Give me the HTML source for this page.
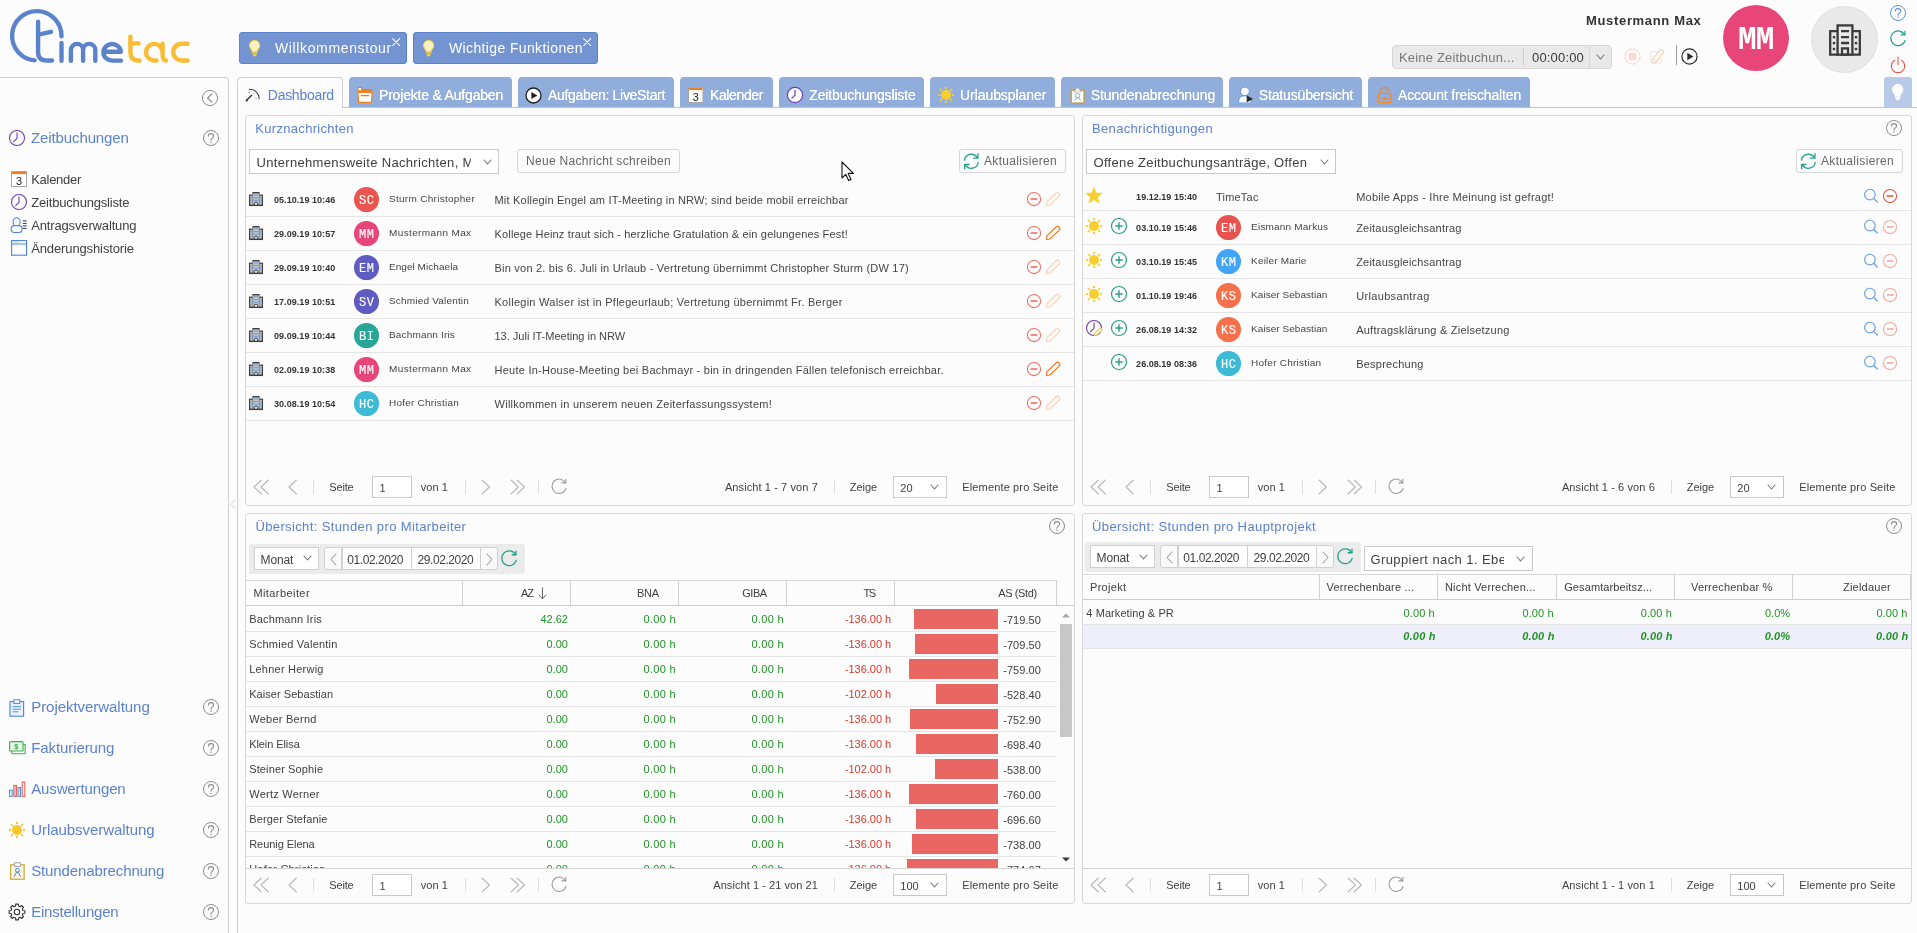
<!DOCTYPE html>
<html><head><meta charset="utf-8"><title>TimeTac</title>
<style>
*{box-sizing:border-box;margin:0;padding:0}
html,body{width:1917px;height:933px;overflow:hidden;background:#fcfcfc;font-family:"Liberation Sans",sans-serif;color:#404040;font-size:12px}
.a{position:absolute}
.t{position:absolute;white-space:nowrap;line-height:1}
svg{position:absolute;overflow:visible}
.blue{color:#5b82cc}
#side{left:0;top:77px;width:229px;height:860px;border-top:1px solid #cfcfcf;border-right:1px solid #cfcfcf;border-top-right-radius:4px}
#main{left:237px;top:81px;width:1700px;height:860px;border-left:1px solid #cfcfcf}
#tabline{left:342px;top:107px;width:1580px;height:1px;background:#c4c4c4}
.tab{position:absolute;top:77px;height:30px;background:#91addb;border-radius:4px 4px 0 0;color:#fff;font-size:14px}
.tab .t{top:10px;font-size:14px}
.tabact{position:absolute;left:237px;top:77px;width:106px;height:31px;border:1px solid #cfcfcf;border-bottom:0;border-radius:4px 4px 0 0;background:#fcfcfc}
.hbtn{position:absolute;top:32px;height:32px;background:#7494d1;border:1px solid #5c82c8;border-radius:3px;color:#fff}
.panel{position:absolute;border:1px solid #d8d8d8;border-radius:3px;background:#fcfcfc}
.ptitle{position:absolute;font-size:13px;color:#5b82cc;white-space:nowrap;line-height:1}
.combo{position:absolute;border:1px solid #c8c8c8;background:#fff;height:25px;overflow:hidden}
.combo .t{font-size:13px;color:#404040;top:5px;left:7px}
.btn{position:absolute;border:1px solid #d6d6d6;border-radius:3px;background:#fcfcfc;height:23px}
.btn .t{font-size:12px;color:#606060;top:5px}
.row{position:absolute;left:0;width:100%;border-bottom:1px solid #e6e6e6}
.av{position:absolute;border-radius:50%;color:#fff;font-family:"Liberation Mono",monospace;font-weight:normal;font-size:12px;text-align:center;letter-spacing:0.5px;-webkit-text-stroke:0.15px #fff}
.av b{display:inline-block;font-weight:normal;position:relative;top:2.1px;left:0.2px}
.dt{position:absolute;font-weight:bold;font-size:10px;color:#333;white-space:nowrap;line-height:1}
.nm{position:absolute;font-size:10px;color:#444;white-space:nowrap;line-height:1;letter-spacing:.45px}
.msg{position:absolute;font-size:12px;color:#444;white-space:nowrap;line-height:1}
.pg{position:absolute;font-size:11.5px;color:#404040;white-space:nowrap;line-height:1}
.pgin{position:absolute;border:1px solid #c8c8c8;background:#fff;height:22px}
.sep{position:absolute;width:1px;background:#e0e0e0}
.gh{position:absolute;font-size:12px;color:#404040;white-space:nowrap;line-height:1}
.gc{position:absolute;font-size:12px;white-space:nowrap;line-height:1}
.grn{color:#1e9422}
.red{color:#d8382c}
.bar{position:absolute;background:#e96763;height:20px}
.dtb{position:absolute;background:#ebebeb;border-radius:3px}
.dfld{position:absolute;border:1px solid #d0d0d0;background:#fff;height:23px}
.dfld .t{font-size:12px;top:5px;color:#404040}
.sbi{position:absolute;font-size:13px;color:#404040;white-space:nowrap;line-height:1}
.sbh{position:absolute;font-size:15px;color:#5b82cc;white-space:nowrap;line-height:1}
#w{position:absolute;left:0;top:0;width:1917px;height:933px;will-change:transform;overflow:hidden}
</style></head><body><div id="w">
<svg style="left:0;top:0" width="200" height="80" viewBox="0 0 200 80" fill="none" stroke-width="4.4" stroke-linecap="round" stroke-linejoin="round">
<g stroke="#5a83cb">
<path d="M34.6 60.4 A24.7 24.7 0 1 1 61.5 36.4"/>
<path d="M38.1 21.6 V52 Q38.1 60.5 46.6 60.5 H52"/>
<path d="M38.3 34.6 L51 31.8"/>
<path d="M61.5 43 V60.8"/>
<path d="M70.9 60.8 V50 a6.1 6.1 0 0 1 12.2 0 V60.8 M83.1 50 a6.1 6.1 0 0 1 12.2 0 V60.8"/>
<path d="M103.6 51.8 H120.8 A8.7 8.3 0 1 0 112.1 60.6 H121"/>
</g>
<g stroke="#f8bc35">
<path d="M130.4 36.6 V52 Q130.4 60.5 138 60.5 H139.6"/>
<path d="M130.4 43.4 H138.6"/>
<path d="M162.6 52.2 A8.3 8.3 0 1 0 154.3 60.5 H156.5 M162.6 43.6 V55 Q162.6 60.5 166 60.5"/>
<path d="M187.6 43.7 H181.6 A8.4 8.4 0 0 0 181.6 60.5 H187.6"/>
</g></svg>
<div class="hbtn" style="left:239px;width:168px"><svg style="left:9.16px;top:6.910000000000001px" width="11.28" height="15.979999999999999" viewBox="0 0 11.28 15.979999999999999"><g transform="scale(0.94)"><path d="M6 0.6 C2.8 0.6 0.6 3 0.6 5.8 C0.6 8 2 9.2 2.9 10.6 C3.3 11.3 3.4 11.8 3.4 12.4 H8.6 C8.6 11.8 8.7 11.3 9.1 10.6 C10 9.2 11.4 8 11.4 5.8 C11.4 3 9.2 0.6 6 0.6 Z" fill="#fdf1c0" stroke="#fbd448" stroke-width="1.1"/><path d="M3.6 13.6 H8.4 M4 15.2 H8 M4.8 16.6 H7.2" stroke="#fbd448" stroke-width="1.2" stroke-linecap="round"/></g></svg><span class="t" style="top:8px;font-size:14px;letter-spacing:0.632px;left:35px;color:#fff;">Willkommenstour</span><svg style="left:152.4px;top:4.6px" width="8.4" height="8.2" viewBox="0 0 9 9" preserveAspectRatio="none"><path d="M0.7 0.7 L8.3 8.3 M8.3 0.7 L0.7 8.3" stroke="#fff" stroke-width="1.1" stroke-linecap="round"/></svg></div>
<div class="hbtn" style="left:413px;width:185px"><svg style="left:9.16px;top:6.910000000000001px" width="11.28" height="15.979999999999999" viewBox="0 0 11.28 15.979999999999999"><g transform="scale(0.94)"><path d="M6 0.6 C2.8 0.6 0.6 3 0.6 5.8 C0.6 8 2 9.2 2.9 10.6 C3.3 11.3 3.4 11.8 3.4 12.4 H8.6 C8.6 11.8 8.7 11.3 9.1 10.6 C10 9.2 11.4 8 11.4 5.8 C11.4 3 9.2 0.6 6 0.6 Z" fill="#fdf1c0" stroke="#fbd448" stroke-width="1.1"/><path d="M3.6 13.6 H8.4 M4 15.2 H8 M4.8 16.6 H7.2" stroke="#fbd448" stroke-width="1.2" stroke-linecap="round"/></g></svg><span class="t" style="top:8px;font-size:14px;letter-spacing:0.369px;left:35px;color:#fff;">Wichtige Funktionen</span><svg style="left:169.4px;top:4.6px" width="8.4" height="8.2" viewBox="0 0 9 9" preserveAspectRatio="none"><path d="M0.7 0.7 L8.3 8.3 M8.3 0.7 L0.7 8.3" stroke="#fff" stroke-width="1.1" stroke-linecap="round"/></svg></div>
<span class="t" style="top:14px;font-size:13px;letter-spacing:0.664px;left:1586px;color:#333;font-weight:bold;">Mustermann Max</span>
<div class="a" style="left:1392px;top:45px;width:220px;height:24px;background:#e9e9e9;border:1px solid #d6d6d6;border-radius:4px"></div>
<div class="a" style="left:1523px;top:48px;width:1px;height:18px;background:#d2d2d2"></div>
<div class="a" style="left:1589px;top:46px;width:1px;height:22px;background:#d8d8d8"></div>
<span class="t" style="top:50.5px;font-size:13px;letter-spacing:0.182px;left:1399px;color:#777;">Keine Zeitbuchun...</span>
<span class="t" style="top:50.5px;font-size:13px;letter-spacing:0.172px;left:1532px;color:#3a3a3a;">00:00:00</span>
<svg style="left:1596.0px;top:53.5px" width="9" height="6" viewBox="0 0 9 6"><path d="M1 1 L4.5 5 L8 1" fill="none" stroke="#777" stroke-width="1.1" stroke-linecap="round" stroke-linejoin="round"/></svg>
<svg style="left:1623.6px;top:47.6px" width="17" height="17" viewBox="0 0 17 17"><circle cx="8.5" cy="8.5" r="7.6" fill="none" stroke="#f6cfc9" stroke-width="1"/><rect x="4.7" y="4.7" width="7.6" height="7.6" rx="1.4" fill="#f9d9d5"/></svg>
<svg style="left:1649px;top:47px" width="18" height="18" viewBox="0 0 18 18"><g opacity="0.45"><path d="M2 4.5 H9 M2 4.5 V16 H12 V11" fill="none" stroke="#e6c9b0" stroke-width="1"/><g transform="rotate(-52 9 9)"><rect x="1" y="6.8" width="15" height="4.4" rx="1" fill="none" stroke="#ee9c62" stroke-width="1.1"/><path d="M4 6.8 V11.2" stroke="#ee9c62" stroke-width="1"/></g></g></svg>
<div class="a" style="left:1676px;top:45px;width:1px;height:20px;background:#9a9a9a"></div>
<svg style="left:1681px;top:48px" width="17" height="17" viewBox="0 0 17 17"><circle cx="8.5" cy="8.5" r="7.6" fill="none" stroke="#2b2b2b" stroke-width="1.2"/><path d="M6.3 4.8 L12.4 8.5 L6.3 12.2 Z" fill="#2b2b2b"/></svg>
<div class="a" style="left:1723px;top:5px;width:66px;height:66px;border-radius:33px;background:#e8457a"></div>
<span class="t" style="left:1738px;top:25px;font-family:'Liberation Mono',monospace;font-weight:bold;font-size:31px;color:#fff;letter-spacing:-0.9px;transform:scaleY(1.07);transform-origin:0 80%">MM</span>
<div class="a" style="left:1811px;top:6px;width:67px;height:67px;border-radius:34px;background:#e9e9e9;border:1px solid #dedede"></div>
<svg style="left:1828px;top:23px" width="34" height="34" viewBox="0 0 34 34"><g fill="none" stroke="#3b3b3b" stroke-width="2.3">
<rect x="9.6" y="2.4" width="14.8" height="29.3"/><path d="M9.6 8.2 H2.2 V31.7 H9.6 M24.4 8.2 H31.8 V31.7 H24.4"/>
<path d="M13 8.2 H21 M13 14.1 H21 M13 20 H21"/><rect x="14" y="25.4" width="6" height="6.3"/></g>
<g fill="#3b3b3b"><rect x="4.8" y="13" width="2.4" height="2.4"/><rect x="4.8" y="18.9" width="2.4" height="2.4"/><rect x="4.8" y="24.8" width="2.4" height="2.4"/><rect x="26.8" y="13" width="2.4" height="2.4"/><rect x="26.8" y="18.9" width="2.4" height="2.4"/><rect x="26.8" y="24.8" width="2.4" height="2.4"/></g></svg>
<svg style="left:1889px;top:3.6999999999999993px" width="18" height="18" viewBox="0 0 18 18"><circle cx="9" cy="9" r="7.5" fill="none" stroke="#5a93e0" stroke-width="1"/><path d="M6.4 7.1 C6.4 5.4 7.6 4.6 9 4.6 C10.5 4.6 11.6 5.5 11.6 6.9 C11.6 8.9 9 8.9 9 11.2" fill="none" stroke="#5a93e0" stroke-width="1.1" stroke-linecap="round"/><circle cx="9" cy="13.3" r="0.75" fill="#5a93e0"/></svg>
<svg style="left:1887px;top:28px" width="22" height="22" viewBox="0 0 22 22"><path d="M17.62 6.82 A7.3 7.3 0 1 0 18.14 12.52" fill="none" stroke="#27a08b" stroke-width="1.2" stroke-linecap="round"/><path d="M17.92 3.22 V6.82 H14.02" fill="none" stroke="#27a08b" stroke-width="1.2" stroke-linecap="round" stroke-linejoin="round"/></svg>
<svg style="left:1889px;top:56px" width="18" height="18" viewBox="0 0 18 18"><path d="M5.6 4.2 A6.7 6.7 0 1 0 12.4 4.2" fill="none" stroke="#e8584a" stroke-width="1.1" stroke-linecap="round"/><line x1="9" y1="1" x2="9" y2="8.6" stroke="#e8584a" stroke-width="1.1" stroke-linecap="round"/></svg>
<div id="side" class="a"></div>
<svg style="left:201px;top:89px" width="18" height="18" viewBox="0 0 18 18"><circle cx="9" cy="9" r="7.6" fill="none" stroke="#8c8c8c" stroke-width="1"/><path d="M10.8 5 L6.6 9 L10.8 13" fill="none" stroke="#8c8c8c" stroke-width="1.1" stroke-linecap="round" stroke-linejoin="round"/></svg>
<svg style="left:8.0px;top:129.0px" width="18" height="18" viewBox="0 0 18 18"><circle cx="9.0" cy="9.0" r="7.5" fill="none" stroke="#6b3fb3" stroke-width="1.1"/><path d="M9.0 4.04 V9.3 L5.640000000000001 12.6" fill="none" stroke="#6b3fb3" stroke-width="1.1" stroke-linecap="round" stroke-linejoin="round"/></svg>
<span class="t" style="top:130px;font-size:15px;letter-spacing:-0.112px;left:31px;color:#5b82cc;">Zeitbuchungen</span>
<svg style="left:202px;top:129px" width="18" height="18" viewBox="0 0 18 18"><circle cx="9" cy="9" r="7.5" fill="none" stroke="#8c8c8c" stroke-width="1"/><path d="M6.4 7.1 C6.4 5.4 7.6 4.6 9 4.6 C10.5 4.6 11.6 5.5 11.6 6.9 C11.6 8.9 9 8.9 9 11.2" fill="none" stroke="#8c8c8c" stroke-width="1.1" stroke-linecap="round"/><circle cx="9" cy="13.3" r="0.75" fill="#8c8c8c"/></svg>
<svg style="left:11px;top:171px" width="16" height="16" viewBox="0 0 16 16"><rect x="0.5" y="0.5" width="15" height="15" fill="#fff" stroke="#a6a6a6" stroke-width="1"/><rect x="1" y="1" width="14" height="2.1" fill="#ef7d22"/><text x="8.0" y="13.6" font-family="Liberation Sans" font-size="11" text-anchor="middle" fill="#222">3</text></svg>
<span class="t" style="top:173px;font-size:13px;letter-spacing:-0.283px;left:31.2px;color:#404040;">Kalender</span>
<svg style="left:9.5px;top:193.2px" width="18" height="18" viewBox="0 0 18 18"><circle cx="9.0" cy="9.0" r="7.5" fill="none" stroke="#6b3fb3" stroke-width="1.1"/><path d="M9.0 4.04 V9.3 L5.640000000000001 12.6" fill="none" stroke="#6b3fb3" stroke-width="1.1" stroke-linecap="round" stroke-linejoin="round"/></svg>
<span class="t" style="top:196px;font-size:13px;letter-spacing:-0.177px;left:31.2px;color:#404040;">Zeitbuchungsliste</span>
<svg style="left:10px;top:217px" width="18" height="17" viewBox="0 0 18 17"><ellipse cx="6.6" cy="4.9" rx="3.5" ry="4.2" fill="none" stroke="#4a86d8" stroke-width="1.1"/><rect x="1.2" y="8.6" width="10.8" height="6.9" rx="3" fill="#fcfcfc" stroke="#4a86d8" stroke-width="1.1"/><path d="M12.8 3.9 H16.6 M12.8 6.4 H16.6 M12.8 8.9 H16.6 M12.8 11.4 H16.6" stroke="#333" stroke-width="1"/></svg>
<span class="t" style="top:219px;font-size:13px;letter-spacing:-0.147px;left:31.2px;color:#404040;">Antragsverwaltung</span>
<svg style="left:10.6px;top:240px" width="17" height="16" viewBox="0 0 17 16"><rect x="0.6" y="0.6" width="15" height="14.6" fill="none" stroke="#4a86d8" stroke-width="1.1"/><line x1="0.6" y1="4" x2="15.6" y2="4" stroke="#4a86d8" stroke-width="1"/><path d="M2.2 2.3 H3.2 M4.4 2.3 H5.4 M6.6 2.3 H7.6" stroke="#888" stroke-width="0.8"/></svg>
<span class="t" style="top:242px;font-size:13px;letter-spacing:-0.119px;left:31.2px;color:#404040;">Änderungshistorie</span>
<span class="t" style="top:699px;font-size:15px;letter-spacing:-0.043px;left:31.2px;color:#5b82cc;">Projektverwaltung</span>
<svg style="left:201.7px;top:698px" width="18" height="18" viewBox="0 0 18 18"><circle cx="9" cy="9" r="7.5" fill="none" stroke="#8c8c8c" stroke-width="1"/><path d="M6.4 7.1 C6.4 5.4 7.6 4.6 9 4.6 C10.5 4.6 11.6 5.5 11.6 6.9 C11.6 8.9 9 8.9 9 11.2" fill="none" stroke="#8c8c8c" stroke-width="1.1" stroke-linecap="round"/><circle cx="9" cy="13.3" r="0.75" fill="#8c8c8c"/></svg>
<span class="t" style="top:740px;font-size:15px;letter-spacing:-0.085px;left:31.2px;color:#5b82cc;">Fakturierung</span>
<svg style="left:201.7px;top:739px" width="18" height="18" viewBox="0 0 18 18"><circle cx="9" cy="9" r="7.5" fill="none" stroke="#8c8c8c" stroke-width="1"/><path d="M6.4 7.1 C6.4 5.4 7.6 4.6 9 4.6 C10.5 4.6 11.6 5.5 11.6 6.9 C11.6 8.9 9 8.9 9 11.2" fill="none" stroke="#8c8c8c" stroke-width="1.1" stroke-linecap="round"/><circle cx="9" cy="13.3" r="0.75" fill="#8c8c8c"/></svg>
<span class="t" style="top:781px;font-size:15px;letter-spacing:-0.126px;left:31.2px;color:#5b82cc;">Auswertungen</span>
<svg style="left:201.7px;top:780px" width="18" height="18" viewBox="0 0 18 18"><circle cx="9" cy="9" r="7.5" fill="none" stroke="#8c8c8c" stroke-width="1"/><path d="M6.4 7.1 C6.4 5.4 7.6 4.6 9 4.6 C10.5 4.6 11.6 5.5 11.6 6.9 C11.6 8.9 9 8.9 9 11.2" fill="none" stroke="#8c8c8c" stroke-width="1.1" stroke-linecap="round"/><circle cx="9" cy="13.3" r="0.75" fill="#8c8c8c"/></svg>
<span class="t" style="top:822px;font-size:15px;letter-spacing:-0.049px;left:31.2px;color:#5b82cc;">Urlaubsverwaltung</span>
<svg style="left:201.7px;top:821px" width="18" height="18" viewBox="0 0 18 18"><circle cx="9" cy="9" r="7.5" fill="none" stroke="#8c8c8c" stroke-width="1"/><path d="M6.4 7.1 C6.4 5.4 7.6 4.6 9 4.6 C10.5 4.6 11.6 5.5 11.6 6.9 C11.6 8.9 9 8.9 9 11.2" fill="none" stroke="#8c8c8c" stroke-width="1.1" stroke-linecap="round"/><circle cx="9" cy="13.3" r="0.75" fill="#8c8c8c"/></svg>
<span class="t" style="top:863px;font-size:15px;letter-spacing:-0.12px;left:31.2px;color:#5b82cc;">Stundenabrechnung</span>
<svg style="left:201.7px;top:862px" width="18" height="18" viewBox="0 0 18 18"><circle cx="9" cy="9" r="7.5" fill="none" stroke="#8c8c8c" stroke-width="1"/><path d="M6.4 7.1 C6.4 5.4 7.6 4.6 9 4.6 C10.5 4.6 11.6 5.5 11.6 6.9 C11.6 8.9 9 8.9 9 11.2" fill="none" stroke="#8c8c8c" stroke-width="1.1" stroke-linecap="round"/><circle cx="9" cy="13.3" r="0.75" fill="#8c8c8c"/></svg>
<span class="t" style="top:904px;font-size:15px;letter-spacing:-0.213px;left:31.2px;color:#5b82cc;">Einstellungen</span>
<svg style="left:201.7px;top:903px" width="18" height="18" viewBox="0 0 18 18"><circle cx="9" cy="9" r="7.5" fill="none" stroke="#8c8c8c" stroke-width="1"/><path d="M6.4 7.1 C6.4 5.4 7.6 4.6 9 4.6 C10.5 4.6 11.6 5.5 11.6 6.9 C11.6 8.9 9 8.9 9 11.2" fill="none" stroke="#8c8c8c" stroke-width="1.1" stroke-linecap="round"/><circle cx="9" cy="13.3" r="0.75" fill="#8c8c8c"/></svg>
<svg style="left:9px;top:698.5px" width="16" height="18" viewBox="0 0 16 18"><rect x="1" y="2.6" width="13.6" height="14.6" fill="#eaf1fb" stroke="#4a86d8" stroke-width="1.1"/><rect x="4.8" y="0.8" width="6" height="3.6" fill="#fff" stroke="#4a86d8" stroke-width="1"/><path d="M3.6 7.6 H12 M3.6 10.2 H12 M3.6 12.8 H9.4" stroke="#4a86d8" stroke-width="0.9"/></svg>
<svg style="left:8.5px;top:741px" width="17" height="14" viewBox="0 0 17 14"><rect x="2.8" y="3.4" width="13.4" height="9.4" rx="1" fill="none" stroke="#3fae49" stroke-width="1.1"/><rect x="0.6" y="0.6" width="13.4" height="9.4" rx="1" fill="#e8f6e9" stroke="#3fae49" stroke-width="1.1"/><text x="7.3" y="8.4" font-family="Liberation Sans" font-size="7.5" font-weight="bold" text-anchor="middle" fill="#3fae49">$</text></svg>
<svg style="left:9px;top:781px" width="17" height="16" viewBox="0 0 17 16"><rect x="0.6" y="9.2" width="2.6" height="6.2" fill="none" stroke="#4a86d8" stroke-width="1"/><rect x="4.8" y="4.4" width="2.6" height="11" fill="#f4c9c6" stroke="#e8584a" stroke-width="1"/><rect x="9" y="6.6" width="2.6" height="8.8" fill="#d3e0f5" stroke="#4a86d8" stroke-width="1"/><rect x="13.2" y="1" width="2.6" height="14.4" fill="none" stroke="#e8584a" stroke-width="1"/></svg>
<svg style="left:7px;top:820px" width="20" height="20" viewBox="0 0 20 20"><circle cx="10" cy="10" r="5" fill="#f9c62c"/><line x1="16.10" y1="10.00" x2="17.90" y2="10.00" stroke="#f9c62c" stroke-width="1.9" stroke-linecap="butt"/><line x1="14.31" y1="14.31" x2="15.73" y2="15.73" stroke="#f9c62c" stroke-width="1.5" stroke-linecap="round"/><line x1="10.00" y1="16.10" x2="10.00" y2="17.90" stroke="#f9c62c" stroke-width="1.9" stroke-linecap="butt"/><line x1="5.69" y1="14.31" x2="4.27" y2="15.73" stroke="#f9c62c" stroke-width="1.5" stroke-linecap="round"/><line x1="3.90" y1="10.00" x2="2.10" y2="10.00" stroke="#f9c62c" stroke-width="1.9" stroke-linecap="butt"/><line x1="5.69" y1="5.69" x2="4.27" y2="4.27" stroke="#f9c62c" stroke-width="1.5" stroke-linecap="round"/><line x1="10.00" y1="3.90" x2="10.00" y2="2.10" stroke="#f9c62c" stroke-width="1.9" stroke-linecap="butt"/><line x1="14.31" y1="5.69" x2="15.73" y2="4.27" stroke="#f9c62c" stroke-width="1.5" stroke-linecap="round"/></svg>
<svg style="left:9.5px;top:862px" width="15" height="18" viewBox="0 0 15 18"><rect x="0.7" y="2.8" width="13.4" height="14.4" fill="#fdf6e3" stroke="#d39b22" stroke-width="1.1"/><rect x="4.4" y="0.8" width="6" height="3.6" fill="#fff" stroke="#999" stroke-width="0.9"/><circle cx="7.4" cy="8.2" r="1.9" fill="none" stroke="#4a86d8" stroke-width="1"/><path d="M4.2 14.8 L6.2 10.6 H8.6 L10.6 14.8" fill="none" stroke="#4a86d8" stroke-width="1"/></svg>
<svg style="left:8px;top:903px" width="18" height="18" viewBox="0 0 18 18"><path d="M14.92 7.53 L16.89 7.69 L16.89 10.31 L14.92 10.47 L14.23 12.15 L15.51 13.65 L13.65 15.51 L12.15 14.23 L10.47 14.92 L10.31 16.89 L7.69 16.89 L7.53 14.92 L5.85 14.23 L4.35 15.51 L2.49 13.65 L3.77 12.15 L3.08 10.47 L1.11 10.31 L1.11 7.69 L3.08 7.53 L3.77 5.85 L2.49 4.35 L4.35 2.49 L5.85 3.77 L7.53 3.08 L7.69 1.11 L10.31 1.11 L10.47 3.08 L12.15 3.77 L13.65 2.49 L15.51 4.35 L14.23 5.85 Z" fill="none" stroke="#333" stroke-width="1.1" stroke-linejoin="round"/><circle cx="9" cy="9" r="2.7" fill="none" stroke="#333" stroke-width="1.1"/></svg>
<div id="main" class="a"></div>
<div id="tabline" class="a"></div>
<svg style="left:230.1px;top:499.2px" width="5.8" height="10.6" viewBox="0 0 5.8 10.6"><path d="M4.8 1 L1 5.3 L4.8 9.6" fill="none" stroke="#dadada" stroke-width="1" stroke-linecap="round" stroke-linejoin="round"/></svg>
<div class="tabact"></div>
<svg style="left:245.4px;top:87.4px" width="15" height="15" viewBox="0 0 15 15"><path d="M4.2 2.2 A9.6 9.6 0 0 1 14.2 11.6" fill="none" stroke="#444" stroke-width="1.1" stroke-linecap="round"/><path d="M1.4 13.6 L6.6 8.2" stroke="#333" stroke-width="1.4" stroke-linecap="round"/><circle cx="1.7" cy="13.4" r="1" fill="#333"/><circle cx="4.2" cy="5.4" r="0.6" fill="#555"/><circle cx="9" cy="6.6" r="0.6" fill="#888"/><circle cx="11" cy="11.4" r="0.6" fill="#888"/></svg>
<span class="t" style="top:88.2px;font-size:14px;letter-spacing:-0.273px;left:267.8px;color:#5b82cc;">Dashboard</span>
<div class="tab" style="left:349px;width:163px"><span class="t" style="top:11.3px;font-size:14px;letter-spacing:-0.191px;left:30px;color:#fff;text-shadow:0 0 0.4px #fff;">Projekte &amp; Aufgaben</span></div>
<div class="tab" style="left:518px;width:155.5px"><span class="t" style="top:11.3px;font-size:14px;letter-spacing:-0.312px;left:30px;color:#fff;text-shadow:0 0 0.4px #fff;">Aufgaben: LiveStart</span></div>
<div class="tab" style="left:679.5px;width:93.0px"><span class="t" style="top:11.3px;font-size:14px;letter-spacing:-0.377px;left:30.5px;color:#fff;text-shadow:0 0 0.4px #fff;">Kalender</span></div>
<div class="tab" style="left:779px;width:145px"><span class="t" style="top:11.3px;font-size:14px;letter-spacing:-0.159px;left:30.3px;color:#fff;text-shadow:0 0 0.4px #fff;">Zeitbuchungsliste</span></div>
<div class="tab" style="left:930px;width:125px"><span class="t" style="top:11.3px;font-size:14px;letter-spacing:-0.062px;left:30px;color:#fff;text-shadow:0 0 0.4px #fff;">Urlaubsplaner</span></div>
<div class="tab" style="left:1061.3px;width:161.70000000000005px"><span class="t" style="top:11.3px;font-size:14px;letter-spacing:-0.109px;left:29.5px;color:#fff;text-shadow:0 0 0.4px #fff;">Stundenabrechnung</span></div>
<div class="tab" style="left:1229.3px;width:132.5px"><span class="t" style="top:11.3px;font-size:14px;letter-spacing:-0.138px;left:29.4px;color:#fff;text-shadow:0 0 0.4px #fff;">Statusübersicht</span></div>
<div class="tab" style="left:1368px;width:162px"><span class="t" style="top:11.3px;font-size:14px;letter-spacing:-0.152px;left:30px;color:#fff;text-shadow:0 0 0.4px #fff;">Account freischalten</span></div>
<svg style="left:356.5px;top:86px" width="15.9" height="17" viewBox="0 0 17 17" preserveAspectRatio="none"><path d="M0.9 4.9 V1.5 H5.1 V3.6 H15.3 V4.9 Z" fill="#fff" stroke="#ef7d1c" stroke-width="1.2" stroke-linejoin="round"/><path d="M0.8 6.4 H16.3 L15.5 16.3 H1.8 Z" fill="#fff" stroke="#ef7d1c" stroke-width="1.3" stroke-linejoin="round"/><line x1="4.6" y1="9.6" x2="12.5" y2="9.6" stroke="#ef7d1c" stroke-width="1.1" stroke-linecap="round"/></svg>
<svg style="left:525.2px;top:86.5px" width="17" height="17" viewBox="0 0 17 17"><circle cx="8.5" cy="8.5" r="7.5" fill="#fff" stroke="#1f1f1f" stroke-width="1.3"/><path d="M6.4 4.9 L12.3 8.5 L6.4 12.1 Z" fill="#1f1f1f"/></svg>
<svg style="left:688px;top:87px" width="15.5" height="16" viewBox="0 0 15.5 16"><rect x="0.5" y="0.5" width="14.5" height="15" fill="#fff" stroke="#a6a6a6" stroke-width="1"/><rect x="1" y="1" width="13.5" height="2.1" fill="#ef7d22"/><text x="7.75" y="13.6" font-family="Liberation Sans" font-size="11" text-anchor="middle" fill="#222">3</text></svg>
<svg style="left:785.6px;top:86.2px" width="18" height="18" viewBox="0 0 18 18"><circle cx="9" cy="9" r="7.6" fill="#fff" stroke="#6b3fb3" stroke-width="1.2"/><path d="M9 4.2 V9.2 L6 12.2" fill="none" stroke="#6b3fb3" stroke-width="1.2" stroke-linecap="round"/></svg>
<svg style="left:935.8px;top:85.2px" width="20" height="20" viewBox="0 0 20 20"><circle cx="10" cy="10" r="5" fill="#f8cf2e"/><line x1="16.10" y1="10.00" x2="17.90" y2="10.00" stroke="#f8cf2e" stroke-width="1.9" stroke-linecap="butt"/><line x1="14.31" y1="14.31" x2="15.73" y2="15.73" stroke="#f8cf2e" stroke-width="1.5" stroke-linecap="round"/><line x1="10.00" y1="16.10" x2="10.00" y2="17.90" stroke="#f8cf2e" stroke-width="1.9" stroke-linecap="butt"/><line x1="5.69" y1="14.31" x2="4.27" y2="15.73" stroke="#f8cf2e" stroke-width="1.5" stroke-linecap="round"/><line x1="3.90" y1="10.00" x2="2.10" y2="10.00" stroke="#f8cf2e" stroke-width="1.9" stroke-linecap="butt"/><line x1="5.69" y1="5.69" x2="4.27" y2="4.27" stroke="#f8cf2e" stroke-width="1.5" stroke-linecap="round"/><line x1="10.00" y1="3.90" x2="10.00" y2="2.10" stroke="#f8cf2e" stroke-width="1.9" stroke-linecap="butt"/><line x1="14.31" y1="5.69" x2="15.73" y2="4.27" stroke="#f8cf2e" stroke-width="1.5" stroke-linecap="round"/></svg>
<svg style="left:1069.5px;top:86.5px" width="15" height="17" viewBox="0 0 15 17"><rect x="1.2" y="3.2" width="12.8" height="12.8" fill="#fff" stroke="#c9982a" stroke-width="1.2"/><path d="M4 5 Q4 3.6 5.4 3.4 Q5.8 1 7.6 1 Q9.4 1 9.8 3.4 Q11.2 3.6 11.2 5 Z" fill="#fff" stroke="#b0b0b0" stroke-width="0.8"/><circle cx="7.6" cy="8.7" r="2.2" fill="none" stroke="#79aee3" stroke-width="1"/><path d="M4.6 13.6 L6.6 10.6 H8.6 L10.6 13.6" fill="none" stroke="#79aee3" stroke-width="1"/></svg>
<svg style="left:1237px;top:86px" width="17" height="18" viewBox="0 0 17 18"><path d="M1.7 17 V15 Q1.7 9.7 7.9 9.7 Q14.1 9.7 14.1 15 V17 Z" fill="#fff" stroke="#4a90d9" stroke-width="0.9"/><circle cx="7.9" cy="5.4" r="4.4" fill="#fff" stroke="#4a90d9" stroke-width="0.9"/><path d="M9.7 9.2 L15.9 13 L9.7 16.5 Z" fill="#2b2b2b"/><rect x="0" y="17" width="17" height="1" fill="#91addb"/></svg>
<svg style="left:1376.5px;top:86px" width="15" height="18" viewBox="0 0 15 18"><path d="M3.7 7 V4.9 Q3.7 1.3 7.6 1.3 Q11.2 1.3 11.6 4.6" fill="none" stroke="#ef8a2c" stroke-width="1.3" stroke-linecap="round"/><rect x="1.4" y="7.3" width="12.4" height="9.4" rx="1.3" fill="none" stroke="#ef8a2c" stroke-width="1.3"/><line x1="5.8" y1="12.5" x2="10.1" y2="12.5" stroke="#ef8a2c" stroke-width="1.3" stroke-linecap="round"/></svg>
<div class="a" style="left:1884px;top:77px;width:28px;height:30.5px;background:#b9cae8;border-radius:3px 3px 0 0"></div>
<svg style="left:1892.3px;top:83.925px" width="11.399999999999999" height="16.15" viewBox="0 0 11.399999999999999 16.15"><g transform="scale(0.95)"><path d="M6 0.6 C2.8 0.6 0.6 3 0.6 5.8 C0.6 8 2 9.2 2.9 10.6 C3.3 11.3 3.4 11.8 3.4 12.4 H8.6 C8.6 11.8 8.7 11.3 9.1 10.6 C10 9.2 11.4 8 11.4 5.8 C11.4 3 9.2 0.6 6 0.6 Z" fill="#fff" stroke="#fff" stroke-width="1.1"/><path d="M3.6 13.6 H8.4 M4 15.2 H8 M4.8 16.6 H7.2" stroke="#fff" stroke-width="1.2" stroke-linecap="round"/></g></svg>
<div class="panel" style="left:245px;top:115px;width:830px;height:391px"></div>
<span class="ptitle" style="top:122px;font-size:13px;letter-spacing:0.309px;left:255.3px;">Kurznachrichten</span>
<div class="combo" style="left:249px;top:149px;width:250px"></div>
<div class="a" style="left:256.5px;top:155px;width:214px;height:16px;overflow:hidden"><span class="t" style="top:1px;font-size:13px;left:0px;color:#404040;letter-spacing:0.33px;">Unternehmensweite Nachrichten, Meine</span></div>
<svg style="left:482.5px;top:159.0px" width="9" height="6" viewBox="0 0 9 6"><path d="M1 1 L4.5 5 L8 1" fill="none" stroke="#777" stroke-width="1.1" stroke-linecap="round" stroke-linejoin="round"/></svg>
<div class="btn" style="left:517px;top:149px;width:163px;height:24px"></div>
<span class="t" style="top:155px;font-size:12px;letter-spacing:0.289px;left:526px;color:#666;">Neue Nachricht schreiben</span>
<div class="btn" style="left:959px;top:149px;width:107px;height:24px"></div><svg style="left:961.6px;top:151.7px" width="18.6" height="18.6" viewBox="0 0 17 17"><path d="M2.2 7.4 A6.4 6.4 0 0 1 14 5.2 M14.8 9.6 A6.4 6.4 0 0 1 3 11.8" fill="none" stroke="#27a08b" stroke-width="1.2" stroke-linecap="round"/><path d="M14.6 1.6 V5.6 H10.6 M2.4 15.4 V11.4 H6.4" fill="none" stroke="#27a08b" stroke-width="1.2" stroke-linecap="round" stroke-linejoin="round"/></svg><span class="t" style="top:155px;font-size:12px;letter-spacing:0.331px;left:984px;color:#666;">Aktualisieren</span>
<div class="a" style="left:246px;top:216px;width:828px;height:1px;background:#e4e4e4"></div>
<svg style="left:249px;top:192.0px" width="14" height="14" viewBox="0 0 14 14"><rect x="0.6" y="3.2" width="12.8" height="10.2" fill="#c6c6c6" stroke="#3c3c3c" stroke-width="1.2"/><path d="M1.6 5.6 H3.4 M1.6 8.4 H3.4 M1.6 11 H3.4 M10.6 5.6 H12.4 M10.6 8.4 H12.4 M10.6 11 H12.4" stroke="#79aee8" stroke-width="1.1"/><rect x="3.8" y="0.6" width="6.4" height="12.8" fill="#c6c6c6" stroke="#777" stroke-width="0.9"/><path d="M5 2.8 H9 M5 5.6 H9 M5 8.4 H9" stroke="#6ea6e8" stroke-width="1.3"/><line x1="3.6" y1="0.7" x2="10.4" y2="0.7" stroke="#3c3c3c" stroke-width="1.3"/><path d="M5.4 13.4 V11.6 Q5.4 10.2 7 10.2 Q8.6 10.2 8.6 11.6 V13.4" fill="#eee" stroke="#3c3c3c" stroke-width="1"/><line x1="0" y1="13.4" x2="14" y2="13.4" stroke="#3c3c3c" stroke-width="1.3"/></svg>
<span class="dt" style="top:195.9px;font-size:9px;letter-spacing:0.05px;left:274px;font-weight:bold;">05.10.19 10:46</span>
<div class="av" style="left:354.2px;top:187.0px;width:24.6px;height:24.6px;line-height:24.6px;background:#ea5550"><b>SC</b></div>
<span class="nm" style="top:194.0px;font-size:10px;letter-spacing:0.286px;left:389px;transform:scale(1,0.9);transform-origin:0 60%;">Sturm Christopher</span>
<span class="msg" style="top:194.8px;font-size:11px;letter-spacing:0.205px;left:494.5px;">Mit Kollegin Engel am IT-Meeting in NRW; sind beide mobil erreichbar</span>
<svg style="left:1025px;top:189.9px" width="18" height="18" viewBox="0 0 18 18"><g opacity="0.85"><circle cx="9" cy="9" r="6.6" fill="none" stroke="#e8584a" stroke-width="1.05"/><line x1="5.6" y1="9" x2="12.4" y2="9" stroke="#e8584a" stroke-width="1.6"/></g></svg>
<svg style="left:1043.1px;top:188.9px" width="20" height="20" viewBox="0 0 20 20"><g opacity="0.3" transform="rotate(-44 10 10)"><path d="M0.9 10 L3.6 7.8 H16.4 A2.2 2.2 0 0 1 16.4 12.2 H3.6 Z" fill="none" stroke="#e87a1f" stroke-width="1.15" stroke-linejoin="round"/></g></svg>
<div class="a" style="left:246px;top:250px;width:828px;height:1px;background:#e4e4e4"></div>
<svg style="left:249px;top:226.0px" width="14" height="14" viewBox="0 0 14 14"><rect x="0.6" y="3.2" width="12.8" height="10.2" fill="#c6c6c6" stroke="#3c3c3c" stroke-width="1.2"/><path d="M1.6 5.6 H3.4 M1.6 8.4 H3.4 M1.6 11 H3.4 M10.6 5.6 H12.4 M10.6 8.4 H12.4 M10.6 11 H12.4" stroke="#79aee8" stroke-width="1.1"/><rect x="3.8" y="0.6" width="6.4" height="12.8" fill="#c6c6c6" stroke="#777" stroke-width="0.9"/><path d="M5 2.8 H9 M5 5.6 H9 M5 8.4 H9" stroke="#6ea6e8" stroke-width="1.3"/><line x1="3.6" y1="0.7" x2="10.4" y2="0.7" stroke="#3c3c3c" stroke-width="1.3"/><path d="M5.4 13.4 V11.6 Q5.4 10.2 7 10.2 Q8.6 10.2 8.6 11.6 V13.4" fill="#eee" stroke="#3c3c3c" stroke-width="1"/><line x1="0" y1="13.4" x2="14" y2="13.4" stroke="#3c3c3c" stroke-width="1.3"/></svg>
<span class="dt" style="top:229.9px;font-size:9px;letter-spacing:0.05px;left:274px;font-weight:bold;">29.09.19 10:57</span>
<div class="av" style="left:354.2px;top:221.0px;width:24.6px;height:24.6px;line-height:24.6px;background:#e8457a"><b>MM</b></div>
<span class="nm" style="top:228.0px;font-size:10px;letter-spacing:0.375px;left:389px;transform:scale(1,0.9);transform-origin:0 60%;">Mustermann Max</span>
<span class="msg" style="top:228.8px;font-size:11px;letter-spacing:0.163px;left:494.5px;">Kollege Heinz traut sich - herzliche Gratulation &amp; ein gelungenes Fest!</span>
<svg style="left:1025px;top:223.9px" width="18" height="18" viewBox="0 0 18 18"><g opacity="0.85"><circle cx="9" cy="9" r="6.6" fill="none" stroke="#e8584a" stroke-width="1.05"/><line x1="5.6" y1="9" x2="12.4" y2="9" stroke="#e8584a" stroke-width="1.6"/></g></svg>
<svg style="left:1043.1px;top:222.9px" width="20" height="20" viewBox="0 0 20 20"><g opacity="1.0" transform="rotate(-44 10 10)"><path d="M0.9 10 L3.6 7.8 H16.4 A2.2 2.2 0 0 1 16.4 12.2 H3.6 Z" fill="none" stroke="#e87a1f" stroke-width="1.15" stroke-linejoin="round"/></g></svg>
<div class="a" style="left:246px;top:284px;width:828px;height:1px;background:#e4e4e4"></div>
<svg style="left:249px;top:260.0px" width="14" height="14" viewBox="0 0 14 14"><rect x="0.6" y="3.2" width="12.8" height="10.2" fill="#c6c6c6" stroke="#3c3c3c" stroke-width="1.2"/><path d="M1.6 5.6 H3.4 M1.6 8.4 H3.4 M1.6 11 H3.4 M10.6 5.6 H12.4 M10.6 8.4 H12.4 M10.6 11 H12.4" stroke="#79aee8" stroke-width="1.1"/><rect x="3.8" y="0.6" width="6.4" height="12.8" fill="#c6c6c6" stroke="#777" stroke-width="0.9"/><path d="M5 2.8 H9 M5 5.6 H9 M5 8.4 H9" stroke="#6ea6e8" stroke-width="1.3"/><line x1="3.6" y1="0.7" x2="10.4" y2="0.7" stroke="#3c3c3c" stroke-width="1.3"/><path d="M5.4 13.4 V11.6 Q5.4 10.2 7 10.2 Q8.6 10.2 8.6 11.6 V13.4" fill="#eee" stroke="#3c3c3c" stroke-width="1"/><line x1="0" y1="13.4" x2="14" y2="13.4" stroke="#3c3c3c" stroke-width="1.3"/></svg>
<span class="dt" style="top:263.90000000000003px;font-size:9px;letter-spacing:0.05px;left:274px;font-weight:bold;">29.09.19 10:40</span>
<div class="av" style="left:354.2px;top:255.0px;width:24.6px;height:24.6px;line-height:24.6px;background:#5f5bc0"><b>EM</b></div>
<span class="nm" style="top:262.0px;font-size:10px;letter-spacing:0.045px;left:389px;transform:scale(1,0.9);transform-origin:0 60%;">Engel Michaela</span>
<span class="msg" style="top:262.8px;font-size:11px;letter-spacing:0.218px;left:494.5px;">Bin von 2. bis 6. Juli in Urlaub - Vertretung übernimmt Christopher Sturm (DW 17)</span>
<svg style="left:1025px;top:257.90000000000003px" width="18" height="18" viewBox="0 0 18 18"><g opacity="0.85"><circle cx="9" cy="9" r="6.6" fill="none" stroke="#e8584a" stroke-width="1.05"/><line x1="5.6" y1="9" x2="12.4" y2="9" stroke="#e8584a" stroke-width="1.6"/></g></svg>
<svg style="left:1043.1px;top:256.90000000000003px" width="20" height="20" viewBox="0 0 20 20"><g opacity="0.3" transform="rotate(-44 10 10)"><path d="M0.9 10 L3.6 7.8 H16.4 A2.2 2.2 0 0 1 16.4 12.2 H3.6 Z" fill="none" stroke="#e87a1f" stroke-width="1.15" stroke-linejoin="round"/></g></svg>
<div class="a" style="left:246px;top:318px;width:828px;height:1px;background:#e4e4e4"></div>
<svg style="left:249px;top:294.0px" width="14" height="14" viewBox="0 0 14 14"><rect x="0.6" y="3.2" width="12.8" height="10.2" fill="#c6c6c6" stroke="#3c3c3c" stroke-width="1.2"/><path d="M1.6 5.6 H3.4 M1.6 8.4 H3.4 M1.6 11 H3.4 M10.6 5.6 H12.4 M10.6 8.4 H12.4 M10.6 11 H12.4" stroke="#79aee8" stroke-width="1.1"/><rect x="3.8" y="0.6" width="6.4" height="12.8" fill="#c6c6c6" stroke="#777" stroke-width="0.9"/><path d="M5 2.8 H9 M5 5.6 H9 M5 8.4 H9" stroke="#6ea6e8" stroke-width="1.3"/><line x1="3.6" y1="0.7" x2="10.4" y2="0.7" stroke="#3c3c3c" stroke-width="1.3"/><path d="M5.4 13.4 V11.6 Q5.4 10.2 7 10.2 Q8.6 10.2 8.6 11.6 V13.4" fill="#eee" stroke="#3c3c3c" stroke-width="1"/><line x1="0" y1="13.4" x2="14" y2="13.4" stroke="#3c3c3c" stroke-width="1.3"/></svg>
<span class="dt" style="top:297.90000000000003px;font-size:9px;letter-spacing:0.05px;left:274px;font-weight:bold;">17.09.19 10:51</span>
<div class="av" style="left:354.2px;top:289.0px;width:24.6px;height:24.6px;line-height:24.6px;background:#5f5bc0"><b>SV</b></div>
<span class="nm" style="top:296.0px;font-size:10px;letter-spacing:0.182px;left:389px;transform:scale(1,0.9);transform-origin:0 60%;">Schmied Valentin</span>
<span class="msg" style="top:296.8px;font-size:11px;letter-spacing:0.261px;left:494.5px;">Kollegin Walser ist in Pflegeurlaub; Vertretung übernimmt Fr. Berger</span>
<svg style="left:1025px;top:291.90000000000003px" width="18" height="18" viewBox="0 0 18 18"><g opacity="0.85"><circle cx="9" cy="9" r="6.6" fill="none" stroke="#e8584a" stroke-width="1.05"/><line x1="5.6" y1="9" x2="12.4" y2="9" stroke="#e8584a" stroke-width="1.6"/></g></svg>
<svg style="left:1043.1px;top:290.90000000000003px" width="20" height="20" viewBox="0 0 20 20"><g opacity="0.3" transform="rotate(-44 10 10)"><path d="M0.9 10 L3.6 7.8 H16.4 A2.2 2.2 0 0 1 16.4 12.2 H3.6 Z" fill="none" stroke="#e87a1f" stroke-width="1.15" stroke-linejoin="round"/></g></svg>
<div class="a" style="left:246px;top:352px;width:828px;height:1px;background:#e4e4e4"></div>
<svg style="left:249px;top:328.0px" width="14" height="14" viewBox="0 0 14 14"><rect x="0.6" y="3.2" width="12.8" height="10.2" fill="#c6c6c6" stroke="#3c3c3c" stroke-width="1.2"/><path d="M1.6 5.6 H3.4 M1.6 8.4 H3.4 M1.6 11 H3.4 M10.6 5.6 H12.4 M10.6 8.4 H12.4 M10.6 11 H12.4" stroke="#79aee8" stroke-width="1.1"/><rect x="3.8" y="0.6" width="6.4" height="12.8" fill="#c6c6c6" stroke="#777" stroke-width="0.9"/><path d="M5 2.8 H9 M5 5.6 H9 M5 8.4 H9" stroke="#6ea6e8" stroke-width="1.3"/><line x1="3.6" y1="0.7" x2="10.4" y2="0.7" stroke="#3c3c3c" stroke-width="1.3"/><path d="M5.4 13.4 V11.6 Q5.4 10.2 7 10.2 Q8.6 10.2 8.6 11.6 V13.4" fill="#eee" stroke="#3c3c3c" stroke-width="1"/><line x1="0" y1="13.4" x2="14" y2="13.4" stroke="#3c3c3c" stroke-width="1.3"/></svg>
<span class="dt" style="top:331.90000000000003px;font-size:9px;letter-spacing:0.05px;left:274px;font-weight:bold;">09.09.19 10:44</span>
<div class="av" style="left:354.2px;top:323.0px;width:24.6px;height:24.6px;line-height:24.6px;background:#27a596"><b>BI</b></div>
<span class="nm" style="top:330.0px;font-size:10px;letter-spacing:0.16px;left:389px;transform:scale(1,0.9);transform-origin:0 60%;">Bachmann Iris</span>
<span class="msg" style="top:330.8px;font-size:11px;letter-spacing:0.002px;left:494.5px;">13. Juli IT-Meeting in NRW</span>
<svg style="left:1025px;top:325.90000000000003px" width="18" height="18" viewBox="0 0 18 18"><g opacity="0.85"><circle cx="9" cy="9" r="6.6" fill="none" stroke="#e8584a" stroke-width="1.05"/><line x1="5.6" y1="9" x2="12.4" y2="9" stroke="#e8584a" stroke-width="1.6"/></g></svg>
<svg style="left:1043.1px;top:324.90000000000003px" width="20" height="20" viewBox="0 0 20 20"><g opacity="0.3" transform="rotate(-44 10 10)"><path d="M0.9 10 L3.6 7.8 H16.4 A2.2 2.2 0 0 1 16.4 12.2 H3.6 Z" fill="none" stroke="#e87a1f" stroke-width="1.15" stroke-linejoin="round"/></g></svg>
<div class="a" style="left:246px;top:386px;width:828px;height:1px;background:#e4e4e4"></div>
<svg style="left:249px;top:362.0px" width="14" height="14" viewBox="0 0 14 14"><rect x="0.6" y="3.2" width="12.8" height="10.2" fill="#c6c6c6" stroke="#3c3c3c" stroke-width="1.2"/><path d="M1.6 5.6 H3.4 M1.6 8.4 H3.4 M1.6 11 H3.4 M10.6 5.6 H12.4 M10.6 8.4 H12.4 M10.6 11 H12.4" stroke="#79aee8" stroke-width="1.1"/><rect x="3.8" y="0.6" width="6.4" height="12.8" fill="#c6c6c6" stroke="#777" stroke-width="0.9"/><path d="M5 2.8 H9 M5 5.6 H9 M5 8.4 H9" stroke="#6ea6e8" stroke-width="1.3"/><line x1="3.6" y1="0.7" x2="10.4" y2="0.7" stroke="#3c3c3c" stroke-width="1.3"/><path d="M5.4 13.4 V11.6 Q5.4 10.2 7 10.2 Q8.6 10.2 8.6 11.6 V13.4" fill="#eee" stroke="#3c3c3c" stroke-width="1"/><line x1="0" y1="13.4" x2="14" y2="13.4" stroke="#3c3c3c" stroke-width="1.3"/></svg>
<span class="dt" style="top:365.90000000000003px;font-size:9px;letter-spacing:0.05px;left:274px;font-weight:bold;">02.09.19 10:38</span>
<div class="av" style="left:354.2px;top:357.0px;width:24.6px;height:24.6px;line-height:24.6px;background:#e8457a"><b>MM</b></div>
<span class="nm" style="top:364.0px;font-size:10px;letter-spacing:0.375px;left:389px;transform:scale(1,0.9);transform-origin:0 60%;">Mustermann Max</span>
<span class="msg" style="top:364.8px;font-size:11px;letter-spacing:0.247px;left:494.5px;">Heute In-House-Meeting bei Bachmayr - bin in dringenden Fällen telefonisch erreichbar.</span>
<svg style="left:1025px;top:359.90000000000003px" width="18" height="18" viewBox="0 0 18 18"><g opacity="0.85"><circle cx="9" cy="9" r="6.6" fill="none" stroke="#e8584a" stroke-width="1.05"/><line x1="5.6" y1="9" x2="12.4" y2="9" stroke="#e8584a" stroke-width="1.6"/></g></svg>
<svg style="left:1043.1px;top:358.90000000000003px" width="20" height="20" viewBox="0 0 20 20"><g opacity="1.0" transform="rotate(-44 10 10)"><path d="M0.9 10 L3.6 7.8 H16.4 A2.2 2.2 0 0 1 16.4 12.2 H3.6 Z" fill="none" stroke="#e87a1f" stroke-width="1.15" stroke-linejoin="round"/></g></svg>
<div class="a" style="left:246px;top:420px;width:828px;height:1px;background:#e4e4e4"></div>
<svg style="left:249px;top:396.0px" width="14" height="14" viewBox="0 0 14 14"><rect x="0.6" y="3.2" width="12.8" height="10.2" fill="#c6c6c6" stroke="#3c3c3c" stroke-width="1.2"/><path d="M1.6 5.6 H3.4 M1.6 8.4 H3.4 M1.6 11 H3.4 M10.6 5.6 H12.4 M10.6 8.4 H12.4 M10.6 11 H12.4" stroke="#79aee8" stroke-width="1.1"/><rect x="3.8" y="0.6" width="6.4" height="12.8" fill="#c6c6c6" stroke="#777" stroke-width="0.9"/><path d="M5 2.8 H9 M5 5.6 H9 M5 8.4 H9" stroke="#6ea6e8" stroke-width="1.3"/><line x1="3.6" y1="0.7" x2="10.4" y2="0.7" stroke="#3c3c3c" stroke-width="1.3"/><path d="M5.4 13.4 V11.6 Q5.4 10.2 7 10.2 Q8.6 10.2 8.6 11.6 V13.4" fill="#eee" stroke="#3c3c3c" stroke-width="1"/><line x1="0" y1="13.4" x2="14" y2="13.4" stroke="#3c3c3c" stroke-width="1.3"/></svg>
<span class="dt" style="top:399.90000000000003px;font-size:9px;letter-spacing:0.05px;left:274px;font-weight:bold;">30.08.19 10:54</span>
<div class="av" style="left:354.2px;top:391.0px;width:24.6px;height:24.6px;line-height:24.6px;background:#3cbad6"><b>HC</b></div>
<span class="nm" style="top:398.0px;font-size:10px;letter-spacing:0.221px;left:389px;transform:scale(1,0.9);transform-origin:0 60%;">Hofer Christian</span>
<span class="msg" style="top:398.8px;font-size:11px;letter-spacing:0.275px;left:494.5px;">Willkommen in unserem neuen Zeiterfassungssystem!</span>
<svg style="left:1025px;top:393.90000000000003px" width="18" height="18" viewBox="0 0 18 18"><g opacity="0.85"><circle cx="9" cy="9" r="6.6" fill="none" stroke="#e8584a" stroke-width="1.05"/><line x1="5.6" y1="9" x2="12.4" y2="9" stroke="#e8584a" stroke-width="1.6"/></g></svg>
<svg style="left:1043.1px;top:392.90000000000003px" width="20" height="20" viewBox="0 0 20 20"><g opacity="0.3" transform="rotate(-44 10 10)"><path d="M0.9 10 L3.6 7.8 H16.4 A2.2 2.2 0 0 1 16.4 12.2 H3.6 Z" fill="none" stroke="#e87a1f" stroke-width="1.15" stroke-linejoin="round"/></g></svg>
<svg style="left:253.2px;top:479.0px" width="9.4" height="16" viewBox="0 0 9.4 16"><path d="M8.4 1 L1 8.0 L8.4 15" fill="none" stroke="#b8b8b8" stroke-width="1.1" stroke-linecap="round" stroke-linejoin="round"/></svg><svg style="left:259.8px;top:479.0px" width="9.4" height="16" viewBox="0 0 9.4 16"><path d="M8.4 1 L1 8.0 L8.4 15" fill="none" stroke="#b8b8b8" stroke-width="1.1" stroke-linecap="round" stroke-linejoin="round"/></svg><svg style="left:287.90000000000003px;top:479.0px" width="9.4" height="16" viewBox="0 0 9.4 16"><path d="M8.4 1 L1 8.0 L8.4 15" fill="none" stroke="#b8b8b8" stroke-width="1.1" stroke-linecap="round" stroke-linejoin="round"/></svg><div class="sep" style="left:313px;top:480px;height:14px"></div><span class="pg" style="top:481.5px;font-size:11px;letter-spacing:-0.179px;left:329.3px;">Seite</span><div class="pgin" style="left:372px;top:475.7px;width:40px"></div><span class="pg" style="top:482.5px;font-size:11px;left:379.5px;">1</span><span class="pg" style="top:481.5px;font-size:11px;letter-spacing:0.013px;left:420.8px;">von 1</span><div class="sep" style="left:465px;top:480px;height:14px"></div><svg style="left:481.3px;top:479.0px" width="9.4" height="16" viewBox="0 0 9.4 16"><path d="M1 1 L8.4 8.0 L1 15" fill="none" stroke="#b8b8b8" stroke-width="1.1" stroke-linecap="round" stroke-linejoin="round"/></svg><svg style="left:509.50000000000006px;top:479.0px" width="9.4" height="16" viewBox="0 0 9.4 16"><path d="M1 1 L8.4 8.0 L1 15" fill="none" stroke="#b8b8b8" stroke-width="1.1" stroke-linecap="round" stroke-linejoin="round"/></svg><svg style="left:516.0999999999999px;top:479.0px" width="9.4" height="16" viewBox="0 0 9.4 16"><path d="M1 1 L8.4 8.0 L1 15" fill="none" stroke="#b8b8b8" stroke-width="1.1" stroke-linecap="round" stroke-linejoin="round"/></svg><div class="sep" style="left:538px;top:480px;height:14px"></div><svg style="left:548px;top:476px" width="22" height="22" viewBox="0 0 22 22"><path d="M17.54 6.88 A7.2 7.2 0 1 0 18.04 12.50" fill="none" stroke="#9a9a9a" stroke-width="1.1" stroke-linecap="round"/><path d="M17.84 3.28 V6.88 H13.94" fill="none" stroke="#9a9a9a" stroke-width="1.1" stroke-linecap="round" stroke-linejoin="round"/></svg><span class="pg" style="top:481.5px;font-size:11px;letter-spacing:0.101px;left:724.9px;">Ansicht 1 - 7 von 7</span><div class="sep" style="left:834px;top:480px;height:14px"></div><span class="pg" style="top:481.5px;font-size:11px;letter-spacing:-0.026px;left:849.8px;">Zeige</span><div class="pgin" style="left:893px;top:475.7px;width:54px"></div><span class="pg" style="top:482.5px;font-size:11px;left:900.3px;">20</span><svg style="left:930.3px;top:484.0px" width="9" height="6" viewBox="0 0 9 6"><path d="M1 1 L4.5 5 L8 1" fill="none" stroke="#777" stroke-width="1.1" stroke-linecap="round" stroke-linejoin="round"/></svg><span class="pg" style="top:481.5px;font-size:11px;letter-spacing:0.143px;left:962.3px;">Elemente pro Seite</span>
<svg style="left:841px;top:161px" width="14" height="21" viewBox="0 0 14 21"><path d="M1 1 V17 L4.8 13.4 L7.6 19.6 L10 18.5 L7.2 12.4 H12.4 Z" fill="#fff" stroke="#111" stroke-width="1.1" stroke-linejoin="round"/></svg>
<div class="panel" style="left:1082px;top:115px;width:830px;height:391px"></div>
<span class="ptitle" style="top:122px;font-size:13px;letter-spacing:0.335px;left:1092px;">Benachrichtigungen</span>
<svg style="left:1885px;top:119px" width="18" height="18" viewBox="0 0 18 18"><circle cx="9" cy="9" r="7.5" fill="none" stroke="#8c8c8c" stroke-width="1"/><path d="M6.4 7.1 C6.4 5.4 7.6 4.6 9 4.6 C10.5 4.6 11.6 5.5 11.6 6.9 C11.6 8.9 9 8.9 9 11.2" fill="none" stroke="#8c8c8c" stroke-width="1.1" stroke-linecap="round"/><circle cx="9" cy="13.3" r="0.75" fill="#8c8c8c"/></svg>
<div class="combo" style="left:1086px;top:149px;width:250px"></div>
<span class="t" style="top:156px;font-size:13px;letter-spacing:0.316px;left:1093.5px;color:#404040;">Offene Zeitbuchungsanträge, Offen</span>
<svg style="left:1319.5px;top:159.0px" width="9" height="6" viewBox="0 0 9 6"><path d="M1 1 L4.5 5 L8 1" fill="none" stroke="#777" stroke-width="1.1" stroke-linecap="round" stroke-linejoin="round"/></svg>
<div class="btn" style="left:1796px;top:149px;width:107px;height:24px"></div><svg style="left:1798.6px;top:151.7px" width="18.6" height="18.6" viewBox="0 0 17 17"><path d="M2.2 7.4 A6.4 6.4 0 0 1 14 5.2 M14.8 9.6 A6.4 6.4 0 0 1 3 11.8" fill="none" stroke="#27a08b" stroke-width="1.2" stroke-linecap="round"/><path d="M14.6 1.6 V5.6 H10.6 M2.4 15.4 V11.4 H6.4" fill="none" stroke="#27a08b" stroke-width="1.2" stroke-linecap="round" stroke-linejoin="round"/></svg><span class="t" style="top:155px;font-size:12px;letter-spacing:0.331px;left:1821px;color:#666;">Aktualisieren</span>
<div class="a" style="left:1083px;top:210px;width:828px;height:1px;background:#e4e4e4"></div>
<svg style="left:1084px;top:185.7px" width="20" height="20" viewBox="0 0 20 20"><polygon points="10.00,1.50 12.10,7.11 18.08,7.37 13.40,11.10 15.00,16.88 10.00,13.57 5.00,16.88 6.60,11.10 1.92,7.37 7.90,7.11" fill="#f7cf30" stroke="#f7cf30" stroke-width="0.8" stroke-linejoin="round"/></svg>
<span class="dt" style="top:192.6px;font-size:9px;letter-spacing:0.036px;left:1136.1px;font-weight:bold;">19.12.19 15:40</span>
<span class="msg" style="top:192.2px;font-size:11px;letter-spacing:0.206px;left:1216px;">TimeTac</span>
<span class="msg" style="top:192.2px;font-size:11px;letter-spacing:0.247px;left:1356.2px;">Mobile Apps - Ihre Meinung ist gefragt!</span>
<svg style="left:1863.2px;top:188.4px" width="16" height="16" viewBox="0 0 16 16"><circle cx="6.9" cy="6.6" r="5.3" fill="none" stroke="#6a9fe3" stroke-width="1.15"/><line x1="10.9" y1="10.6" x2="14.3" y2="14" stroke="#6a9fe3" stroke-width="1.3" stroke-linecap="round"/></svg>
<svg style="left:1881px;top:187.2px" width="18" height="18" viewBox="0 0 18 18"><g opacity="1"><circle cx="9" cy="9" r="6.6" fill="none" stroke="#e8584a" stroke-width="1.05"/><line x1="5.6" y1="9" x2="12.4" y2="9" stroke="#e8584a" stroke-width="1.6"/></g></svg>
<div class="a" style="left:1083px;top:244px;width:828px;height:1px;background:#e4e4e4"></div>
<svg style="left:1084px;top:215.89999999999998px" width="20" height="20" viewBox="0 0 20 20"><circle cx="10" cy="10" r="5" fill="#f8cf2e"/><line x1="16.10" y1="10.00" x2="18.00" y2="10.00" stroke="#f8cf2e" stroke-width="1.9" stroke-linecap="butt"/><line x1="14.31" y1="14.31" x2="15.80" y2="15.80" stroke="#f8cf2e" stroke-width="1.5" stroke-linecap="round"/><line x1="10.00" y1="16.10" x2="10.00" y2="18.00" stroke="#f8cf2e" stroke-width="1.9" stroke-linecap="butt"/><line x1="5.69" y1="14.31" x2="4.20" y2="15.80" stroke="#f8cf2e" stroke-width="1.5" stroke-linecap="round"/><line x1="3.90" y1="10.00" x2="2.00" y2="10.00" stroke="#f8cf2e" stroke-width="1.9" stroke-linecap="butt"/><line x1="5.69" y1="5.69" x2="4.20" y2="4.20" stroke="#f8cf2e" stroke-width="1.5" stroke-linecap="round"/><line x1="10.00" y1="3.90" x2="10.00" y2="2.00" stroke="#f8cf2e" stroke-width="1.9" stroke-linecap="butt"/><line x1="14.31" y1="5.69" x2="15.80" y2="4.20" stroke="#f8cf2e" stroke-width="1.5" stroke-linecap="round"/></svg>
<svg style="left:1109px;top:215.89999999999998px" width="20" height="20" viewBox="0 0 20 20"><circle cx="10" cy="10" r="7.5" fill="none" stroke="#2a9d8a" stroke-width="1.2"/><path d="M6.3 10 H13.7 M10 6.3 V13.7" stroke="#2a9d8a" stroke-width="1.4"/></svg>
<span class="dt" style="top:224.0px;font-size:9px;letter-spacing:0.036px;left:1136.1px;font-weight:bold;">03.10.19 15:46</span>
<div class="av" style="left:1216.3px;top:215.39999999999998px;width:24.6px;height:24.6px;line-height:24.6px;background:#e9534f"><b>EM</b></div>
<span class="nm" style="top:222.39999999999998px;font-size:10px;letter-spacing:0.195px;left:1251.1px;transform:scale(1,0.9);transform-origin:0 60%;">Eismann Markus</span>
<span class="msg" style="top:223.29999999999998px;font-size:11px;letter-spacing:0.197px;left:1356.2px;">Zeitausgleichsantrag</span>
<svg style="left:1863.2px;top:219.29999999999998px" width="16" height="16" viewBox="0 0 16 16"><circle cx="6.9" cy="6.6" r="5.3" fill="none" stroke="#6a9fe3" stroke-width="1.15"/><line x1="10.9" y1="10.6" x2="14.3" y2="14" stroke="#6a9fe3" stroke-width="1.3" stroke-linecap="round"/></svg>
<svg style="left:1881px;top:218.1px" width="18" height="18" viewBox="0 0 18 18"><g opacity="0.5"><circle cx="9" cy="9" r="6.6" fill="none" stroke="#e8584a" stroke-width="1.05"/><line x1="5.6" y1="9" x2="12.4" y2="9" stroke="#e8584a" stroke-width="1.6"/></g></svg>
<div class="a" style="left:1083px;top:278px;width:828px;height:1px;background:#e4e4e4"></div>
<svg style="left:1084px;top:249.89999999999998px" width="20" height="20" viewBox="0 0 20 20"><circle cx="10" cy="10" r="5" fill="#f8cf2e"/><line x1="16.10" y1="10.00" x2="18.00" y2="10.00" stroke="#f8cf2e" stroke-width="1.9" stroke-linecap="butt"/><line x1="14.31" y1="14.31" x2="15.80" y2="15.80" stroke="#f8cf2e" stroke-width="1.5" stroke-linecap="round"/><line x1="10.00" y1="16.10" x2="10.00" y2="18.00" stroke="#f8cf2e" stroke-width="1.9" stroke-linecap="butt"/><line x1="5.69" y1="14.31" x2="4.20" y2="15.80" stroke="#f8cf2e" stroke-width="1.5" stroke-linecap="round"/><line x1="3.90" y1="10.00" x2="2.00" y2="10.00" stroke="#f8cf2e" stroke-width="1.9" stroke-linecap="butt"/><line x1="5.69" y1="5.69" x2="4.20" y2="4.20" stroke="#f8cf2e" stroke-width="1.5" stroke-linecap="round"/><line x1="10.00" y1="3.90" x2="10.00" y2="2.00" stroke="#f8cf2e" stroke-width="1.9" stroke-linecap="butt"/><line x1="14.31" y1="5.69" x2="15.80" y2="4.20" stroke="#f8cf2e" stroke-width="1.5" stroke-linecap="round"/></svg>
<svg style="left:1109px;top:249.89999999999998px" width="20" height="20" viewBox="0 0 20 20"><circle cx="10" cy="10" r="7.5" fill="none" stroke="#2a9d8a" stroke-width="1.2"/><path d="M6.3 10 H13.7 M10 6.3 V13.7" stroke="#2a9d8a" stroke-width="1.4"/></svg>
<span class="dt" style="top:258.0px;font-size:9px;letter-spacing:0.036px;left:1136.1px;font-weight:bold;">03.10.19 15:45</span>
<div class="av" style="left:1216.3px;top:249.39999999999998px;width:24.6px;height:24.6px;line-height:24.6px;background:#42a5f5"><b>KM</b></div>
<span class="nm" style="top:256.4px;font-size:10px;letter-spacing:0.18px;left:1251.1px;transform:scale(1,0.9);transform-origin:0 60%;">Keiler Marie</span>
<span class="msg" style="top:257.3px;font-size:11px;letter-spacing:0.197px;left:1356.2px;">Zeitausgleichsantrag</span>
<svg style="left:1863.2px;top:253.3px" width="16" height="16" viewBox="0 0 16 16"><circle cx="6.9" cy="6.6" r="5.3" fill="none" stroke="#6a9fe3" stroke-width="1.15"/><line x1="10.9" y1="10.6" x2="14.3" y2="14" stroke="#6a9fe3" stroke-width="1.3" stroke-linecap="round"/></svg>
<svg style="left:1881px;top:252.09999999999997px" width="18" height="18" viewBox="0 0 18 18"><g opacity="0.5"><circle cx="9" cy="9" r="6.6" fill="none" stroke="#e8584a" stroke-width="1.05"/><line x1="5.6" y1="9" x2="12.4" y2="9" stroke="#e8584a" stroke-width="1.6"/></g></svg>
<div class="a" style="left:1083px;top:312px;width:828px;height:1px;background:#e4e4e4"></div>
<svg style="left:1084px;top:283.9px" width="20" height="20" viewBox="0 0 20 20"><circle cx="10" cy="10" r="5" fill="#f8cf2e"/><line x1="16.10" y1="10.00" x2="18.00" y2="10.00" stroke="#f8cf2e" stroke-width="1.9" stroke-linecap="butt"/><line x1="14.31" y1="14.31" x2="15.80" y2="15.80" stroke="#f8cf2e" stroke-width="1.5" stroke-linecap="round"/><line x1="10.00" y1="16.10" x2="10.00" y2="18.00" stroke="#f8cf2e" stroke-width="1.9" stroke-linecap="butt"/><line x1="5.69" y1="14.31" x2="4.20" y2="15.80" stroke="#f8cf2e" stroke-width="1.5" stroke-linecap="round"/><line x1="3.90" y1="10.00" x2="2.00" y2="10.00" stroke="#f8cf2e" stroke-width="1.9" stroke-linecap="butt"/><line x1="5.69" y1="5.69" x2="4.20" y2="4.20" stroke="#f8cf2e" stroke-width="1.5" stroke-linecap="round"/><line x1="10.00" y1="3.90" x2="10.00" y2="2.00" stroke="#f8cf2e" stroke-width="1.9" stroke-linecap="butt"/><line x1="14.31" y1="5.69" x2="15.80" y2="4.20" stroke="#f8cf2e" stroke-width="1.5" stroke-linecap="round"/></svg>
<svg style="left:1109px;top:283.9px" width="20" height="20" viewBox="0 0 20 20"><circle cx="10" cy="10" r="7.5" fill="none" stroke="#2a9d8a" stroke-width="1.2"/><path d="M6.3 10 H13.7 M10 6.3 V13.7" stroke="#2a9d8a" stroke-width="1.4"/></svg>
<span class="dt" style="top:292.0px;font-size:9px;letter-spacing:0.036px;left:1136.1px;font-weight:bold;">01.10.19 19:46</span>
<div class="av" style="left:1216.3px;top:283.4px;width:24.6px;height:24.6px;line-height:24.6px;background:#f4714b"><b>KS</b></div>
<span class="nm" style="top:290.4px;font-size:10px;letter-spacing:0.043px;left:1251.1px;transform:scale(1,0.9);transform-origin:0 60%;">Kaiser Sebastian</span>
<span class="msg" style="top:291.3px;font-size:11px;letter-spacing:0.337px;left:1356.2px;">Urlaubsantrag</span>
<svg style="left:1863.2px;top:287.3px" width="16" height="16" viewBox="0 0 16 16"><circle cx="6.9" cy="6.6" r="5.3" fill="none" stroke="#6a9fe3" stroke-width="1.15"/><line x1="10.9" y1="10.6" x2="14.3" y2="14" stroke="#6a9fe3" stroke-width="1.3" stroke-linecap="round"/></svg>
<svg style="left:1881px;top:286.09999999999997px" width="18" height="18" viewBox="0 0 18 18"><g opacity="0.5"><circle cx="9" cy="9" r="6.6" fill="none" stroke="#e8584a" stroke-width="1.05"/><line x1="5.6" y1="9" x2="12.4" y2="9" stroke="#e8584a" stroke-width="1.6"/></g></svg>
<div class="a" style="left:1083px;top:346px;width:828px;height:1px;background:#e4e4e4"></div>
<svg style="left:1085.0px;top:319.0px" width="18" height="18" viewBox="0 0 18 18"><circle cx="9.0" cy="9.0" r="7.5" fill="none" stroke="#6a3fa8" stroke-width="1.1"/><path d="M9.0 4.04 V9.3 L5.640000000000001 12.6" fill="none" stroke="#6a3fa8" stroke-width="1.1" stroke-linecap="round" stroke-linejoin="round"/></svg>
<svg style="left:1091.9px;top:325.8px" width="12" height="12" viewBox="0 0 12 12"><g transform="rotate(-43 6 6)"><rect x="1.2" y="4.7" width="9.6" height="2.6" rx="1.3" fill="#fff" stroke="#f2c933" stroke-width="1.1"/></g></svg>
<svg style="left:1109px;top:317.9px" width="20" height="20" viewBox="0 0 20 20"><circle cx="10" cy="10" r="7.5" fill="none" stroke="#2a9d8a" stroke-width="1.2"/><path d="M6.3 10 H13.7 M10 6.3 V13.7" stroke="#2a9d8a" stroke-width="1.4"/></svg>
<span class="dt" style="top:326.0px;font-size:9px;letter-spacing:0.036px;left:1136.1px;font-weight:bold;">26.08.19 14:32</span>
<div class="av" style="left:1216.3px;top:317.4px;width:24.6px;height:24.6px;line-height:24.6px;background:#f4714b"><b>KS</b></div>
<span class="nm" style="top:324.4px;font-size:10px;letter-spacing:0.043px;left:1251.1px;transform:scale(1,0.9);transform-origin:0 60%;">Kaiser Sebastian</span>
<span class="msg" style="top:325.3px;font-size:11px;letter-spacing:0.23px;left:1356.2px;">Auftragsklärung &amp; Zielsetzung</span>
<svg style="left:1863.2px;top:321.3px" width="16" height="16" viewBox="0 0 16 16"><circle cx="6.9" cy="6.6" r="5.3" fill="none" stroke="#6a9fe3" stroke-width="1.15"/><line x1="10.9" y1="10.6" x2="14.3" y2="14" stroke="#6a9fe3" stroke-width="1.3" stroke-linecap="round"/></svg>
<svg style="left:1881px;top:320.09999999999997px" width="18" height="18" viewBox="0 0 18 18"><g opacity="0.5"><circle cx="9" cy="9" r="6.6" fill="none" stroke="#e8584a" stroke-width="1.05"/><line x1="5.6" y1="9" x2="12.4" y2="9" stroke="#e8584a" stroke-width="1.6"/></g></svg>
<div class="a" style="left:1083px;top:380px;width:828px;height:1px;background:#e4e4e4"></div>
<svg style="left:1109px;top:351.9px" width="20" height="20" viewBox="0 0 20 20"><circle cx="10" cy="10" r="7.5" fill="none" stroke="#2a9d8a" stroke-width="1.2"/><path d="M6.3 10 H13.7 M10 6.3 V13.7" stroke="#2a9d8a" stroke-width="1.4"/></svg>
<span class="dt" style="top:360.0px;font-size:9px;letter-spacing:0.036px;left:1136.1px;font-weight:bold;">26.08.19 08:36</span>
<div class="av" style="left:1216.3px;top:351.4px;width:24.6px;height:24.6px;line-height:24.6px;background:#3cbad6"><b>HC</b></div>
<span class="nm" style="top:358.4px;font-size:10px;letter-spacing:0.234px;left:1251.1px;transform:scale(1,0.9);transform-origin:0 60%;">Hofer Christian</span>
<span class="msg" style="top:359.3px;font-size:11px;letter-spacing:0.239px;left:1356.2px;">Besprechung</span>
<svg style="left:1863.2px;top:355.3px" width="16" height="16" viewBox="0 0 16 16"><circle cx="6.9" cy="6.6" r="5.3" fill="none" stroke="#6a9fe3" stroke-width="1.15"/><line x1="10.9" y1="10.6" x2="14.3" y2="14" stroke="#6a9fe3" stroke-width="1.3" stroke-linecap="round"/></svg>
<svg style="left:1881px;top:354.09999999999997px" width="18" height="18" viewBox="0 0 18 18"><g opacity="0.5"><circle cx="9" cy="9" r="6.6" fill="none" stroke="#e8584a" stroke-width="1.05"/><line x1="5.6" y1="9" x2="12.4" y2="9" stroke="#e8584a" stroke-width="1.6"/></g></svg>
<svg style="left:1090.2px;top:479.0px" width="9.4" height="16" viewBox="0 0 9.4 16"><path d="M8.4 1 L1 8.0 L8.4 15" fill="none" stroke="#b8b8b8" stroke-width="1.1" stroke-linecap="round" stroke-linejoin="round"/></svg><svg style="left:1096.8px;top:479.0px" width="9.4" height="16" viewBox="0 0 9.4 16"><path d="M8.4 1 L1 8.0 L8.4 15" fill="none" stroke="#b8b8b8" stroke-width="1.1" stroke-linecap="round" stroke-linejoin="round"/></svg><svg style="left:1124.8999999999999px;top:479.0px" width="9.4" height="16" viewBox="0 0 9.4 16"><path d="M8.4 1 L1 8.0 L8.4 15" fill="none" stroke="#b8b8b8" stroke-width="1.1" stroke-linecap="round" stroke-linejoin="round"/></svg><div class="sep" style="left:1150px;top:480px;height:14px"></div><span class="pg" style="top:481.5px;font-size:11px;letter-spacing:-0.179px;left:1166.3px;">Seite</span><div class="pgin" style="left:1209px;top:475.7px;width:40px"></div><span class="pg" style="top:482.5px;font-size:11px;left:1216.5px;">1</span><span class="pg" style="top:481.5px;font-size:11px;letter-spacing:0.013px;left:1257.8px;">von 1</span><div class="sep" style="left:1302px;top:480px;height:14px"></div><svg style="left:1318.3px;top:479.0px" width="9.4" height="16" viewBox="0 0 9.4 16"><path d="M1 1 L8.4 8.0 L1 15" fill="none" stroke="#b8b8b8" stroke-width="1.1" stroke-linecap="round" stroke-linejoin="round"/></svg><svg style="left:1346.5px;top:479.0px" width="9.4" height="16" viewBox="0 0 9.4 16"><path d="M1 1 L8.4 8.0 L1 15" fill="none" stroke="#b8b8b8" stroke-width="1.1" stroke-linecap="round" stroke-linejoin="round"/></svg><svg style="left:1353.1px;top:479.0px" width="9.4" height="16" viewBox="0 0 9.4 16"><path d="M1 1 L8.4 8.0 L1 15" fill="none" stroke="#b8b8b8" stroke-width="1.1" stroke-linecap="round" stroke-linejoin="round"/></svg><div class="sep" style="left:1375px;top:480px;height:14px"></div><svg style="left:1385px;top:476px" width="22" height="22" viewBox="0 0 22 22"><path d="M17.54 6.88 A7.2 7.2 0 1 0 18.04 12.50" fill="none" stroke="#9a9a9a" stroke-width="1.1" stroke-linecap="round"/><path d="M17.84 3.28 V6.88 H13.94" fill="none" stroke="#9a9a9a" stroke-width="1.1" stroke-linecap="round" stroke-linejoin="round"/></svg><span class="pg" style="top:481.5px;font-size:11px;letter-spacing:0.101px;left:1561.9px;">Ansicht 1 - 6 von 6</span><div class="sep" style="left:1671px;top:480px;height:14px"></div><span class="pg" style="top:481.5px;font-size:11px;letter-spacing:-0.026px;left:1686.8px;">Zeige</span><div class="pgin" style="left:1730px;top:475.7px;width:54px"></div><span class="pg" style="top:482.5px;font-size:11px;left:1737.3px;">20</span><svg style="left:1767.3px;top:484.0px" width="9" height="6" viewBox="0 0 9 6"><path d="M1 1 L4.5 5 L8 1" fill="none" stroke="#777" stroke-width="1.1" stroke-linecap="round" stroke-linejoin="round"/></svg><span class="pg" style="top:481.5px;font-size:11px;letter-spacing:0.143px;left:1799.3px;">Elemente pro Seite</span>
<div class="panel" style="left:245px;top:513px;width:830px;height:391px"></div>
<span class="ptitle" style="top:520px;font-size:13px;letter-spacing:0.381px;left:255.4px;">Übersicht: Stunden pro Mitarbeiter</span>
<svg style="left:1047.5px;top:517px" width="18" height="18" viewBox="0 0 18 18"><circle cx="9" cy="9" r="7.5" fill="none" stroke="#8c8c8c" stroke-width="1"/><path d="M6.4 7.1 C6.4 5.4 7.6 4.6 9 4.6 C10.5 4.6 11.6 5.5 11.6 6.9 C11.6 8.9 9 8.9 9 11.2" fill="none" stroke="#8c8c8c" stroke-width="1.1" stroke-linecap="round"/><circle cx="9" cy="13.3" r="0.75" fill="#8c8c8c"/></svg>
<div class="dtb" style="left:249px;top:544px;width:276px;height:29.5px"></div><div class="dfld" style="left:254px;top:546.8499999999999px;width:65px"></div><span class="t" style="top:554.05px;font-size:12px;letter-spacing:-0.149px;left:260.6px;color:#404040;">Monat</span><svg style="left:302.5px;top:555.25px" width="9" height="6" viewBox="0 0 9 6"><path d="M1 1 L4.5 5 L8 1" fill="none" stroke="#777" stroke-width="1.1" stroke-linecap="round" stroke-linejoin="round"/></svg><div class="dfld" style="left:324.2px;top:546.8499999999999px;width:18.3px;border-radius:3px 0 0 3px;background:#fafafa"></div><svg style="left:329.8px;top:552.55px" width="7" height="13" viewBox="0 0 7 13"><path d="M6 1 L1 6.5 L6 12" fill="none" stroke="#a0a0a0" stroke-width="1.1" stroke-linecap="round" stroke-linejoin="round"/></svg><div class="dfld" style="left:341.5px;top:546.8499999999999px;width:70px"></div><span class="t" style="top:554.05px;font-size:12px;letter-spacing:-0.443px;left:347.3px;color:#404040;">01.02.2020</span><div class="dfld" style="left:410.5px;top:546.8499999999999px;width:70.5px"></div><span class="t" style="top:554.05px;font-size:12px;letter-spacing:-0.423px;left:417.5px;color:#404040;">29.02.2020</span><div class="dfld" style="left:480px;top:546.8499999999999px;width:17.5px;border-radius:0 3px 3px 0;background:#fafafa"></div><svg style="left:485.5px;top:552.55px" width="7" height="13" viewBox="0 0 7 13"><path d="M1 1 L6 6.5 L1 12" fill="none" stroke="#a0a0a0" stroke-width="1.1" stroke-linecap="round" stroke-linejoin="round"/></svg><svg style="left:497.8px;top:548.05px" width="22" height="22" viewBox="0 0 22 22"><path d="M17.71 6.77 A7.4 7.4 0 1 0 18.24 12.54" fill="none" stroke="#27a08b" stroke-width="1.3" stroke-linecap="round"/><path d="M18.01 3.17 V6.77 H14.11" fill="none" stroke="#27a08b" stroke-width="1.3" stroke-linecap="round" stroke-linejoin="round"/></svg>
<div class="a" style="left:246px;top:580px;width:811px;height:1px;background:#d8d8d8"></div>
<div class="a" style="left:246px;top:605px;width:828px;height:1px;background:#cdcdcd"></div>
<div class="a" style="left:462px;top:581px;width:1px;height:24px;background:#d0d0d0"></div>
<div class="a" style="left:570px;top:581px;width:1px;height:24px;background:#d0d0d0"></div>
<div class="a" style="left:678px;top:581px;width:1px;height:24px;background:#d0d0d0"></div>
<div class="a" style="left:786px;top:581px;width:1px;height:24px;background:#d0d0d0"></div>
<div class="a" style="left:894px;top:581px;width:1px;height:24px;background:#d0d0d0"></div>
<div class="a" style="left:1056px;top:581px;width:1px;height:24px;background:#d0d0d0"></div>
<span class="gh" style="top:587.5px;font-size:11px;letter-spacing:0.421px;left:253.4px;">Mitarbeiter</span>
<span class="gh" style="top:587.5px;font-size:11px;letter-spacing:-0.881px;left:520.9px;">AZ</span>
<svg style="left:538px;top:586.5px" width="9" height="13" viewBox="0 0 9 13"><path d="M4.5 0.8 V11.6 M1 8 L4.5 11.8 L8 8" fill="none" stroke="#666" stroke-width="1" stroke-linecap="round" stroke-linejoin="round"/></svg>
<span class="gh" style="top:587.5px;font-size:11px;letter-spacing:-0.242px;left:636.9px;">BNA</span>
<span class="gh" style="top:587.5px;font-size:11px;letter-spacing:-0.453px;left:742.2px;">GIBA</span>
<span class="gh" style="top:587.5px;font-size:11px;letter-spacing:-1.581px;left:863.6px;">TS</span>
<span class="gh" style="top:587.5px;font-size:11px;letter-spacing:-0.387px;left:998.2px;">AS (Std)</span>
<div class="a" style="left:246px;top:606px;width:828px;height:262px;overflow:hidden">
<div class="a" style="left:0;top:25px;width:810.5px;height:1px;background:#e4e4e4"></div>
<span class="gc" style="top:8.0px;font-size:11px;letter-spacing:0.189px;left:3.1999999999999886px;color:#404040;">Bachmann Iris</span>
<span class="gc grn" style="top:8.0px;font-size:11px;letter-spacing:0.008px;left:294.4px;">42.62</span>
<span class="gc grn" style="top:8.0px;font-size:11px;letter-spacing:0.296px;left:397.6px;">0.00 h</span>
<span class="gc grn" style="top:8.0px;font-size:11px;letter-spacing:0.296px;left:505.5px;">0.00 h</span>
<span class="gc red" style="top:8.0px;font-size:11px;letter-spacing:-0.026px;left:598.9px;">-136.00 h</span>
<div class="bar" style="left:667.7px;top:3.4px;width:84.3px;height:19.6px"></div>
<span class="gc" style="top:9.2px;font-size:11px;letter-spacing:0.051px;left:757.2px;color:#404040;">-719.50</span>
<div class="a" style="left:0;top:50px;width:810.5px;height:1px;background:#e4e4e4"></div>
<span class="gc" style="top:33.0px;font-size:11px;letter-spacing:0.229px;left:3.1999999999999886px;color:#404040;">Schmied Valentin</span>
<span class="gc grn" style="top:33.0px;font-size:11px;letter-spacing:-0.009px;left:300.6px;">0.00</span>
<span class="gc grn" style="top:33.0px;font-size:11px;letter-spacing:0.296px;left:397.6px;">0.00 h</span>
<span class="gc grn" style="top:33.0px;font-size:11px;letter-spacing:0.296px;left:505.5px;">0.00 h</span>
<span class="gc red" style="top:33.0px;font-size:11px;letter-spacing:-0.026px;left:598.9px;">-136.00 h</span>
<div class="bar" style="left:668.8px;top:28.4px;width:83.2px;height:19.6px"></div>
<span class="gc" style="top:34.2px;font-size:11px;letter-spacing:0.051px;left:757.2px;color:#404040;">-709.50</span>
<div class="a" style="left:0;top:75px;width:810.5px;height:1px;background:#e4e4e4"></div>
<span class="gc" style="top:58.0px;font-size:11px;letter-spacing:0.226px;left:3.1999999999999886px;color:#404040;">Lehner Herwig</span>
<span class="gc grn" style="top:58.0px;font-size:11px;letter-spacing:-0.009px;left:300.6px;">0.00</span>
<span class="gc grn" style="top:58.0px;font-size:11px;letter-spacing:0.296px;left:397.6px;">0.00 h</span>
<span class="gc grn" style="top:58.0px;font-size:11px;letter-spacing:0.296px;left:505.5px;">0.00 h</span>
<span class="gc red" style="top:58.0px;font-size:11px;letter-spacing:-0.026px;left:598.9px;">-136.00 h</span>
<div class="bar" style="left:663.0px;top:53.4px;width:89.0px;height:19.6px"></div>
<span class="gc" style="top:59.2px;font-size:11px;letter-spacing:0.051px;left:757.2px;color:#404040;">-759.00</span>
<div class="a" style="left:0;top:100px;width:810.5px;height:1px;background:#e4e4e4"></div>
<span class="gc" style="top:83.0px;font-size:11px;letter-spacing:0.049px;left:3.1999999999999886px;color:#404040;">Kaiser Sebastian</span>
<span class="gc grn" style="top:83.0px;font-size:11px;letter-spacing:-0.009px;left:300.6px;">0.00</span>
<span class="gc grn" style="top:83.0px;font-size:11px;letter-spacing:0.296px;left:397.6px;">0.00 h</span>
<span class="gc grn" style="top:83.0px;font-size:11px;letter-spacing:0.296px;left:505.5px;">0.00 h</span>
<span class="gc red" style="top:83.0px;font-size:11px;letter-spacing:-0.026px;left:598.9px;">-102.00 h</span>
<div class="bar" style="left:690.1px;top:78.4px;width:61.9px;height:19.6px"></div>
<span class="gc" style="top:84.2px;font-size:11px;letter-spacing:0.051px;left:757.2px;color:#404040;">-528.40</span>
<div class="a" style="left:0;top:125px;width:810.5px;height:1px;background:#e4e4e4"></div>
<span class="gc" style="top:108.0px;font-size:11px;letter-spacing:0.26px;left:3.1999999999999886px;color:#404040;">Weber Bernd</span>
<span class="gc grn" style="top:108.0px;font-size:11px;letter-spacing:-0.009px;left:300.6px;">0.00</span>
<span class="gc grn" style="top:108.0px;font-size:11px;letter-spacing:0.296px;left:397.6px;">0.00 h</span>
<span class="gc grn" style="top:108.0px;font-size:11px;letter-spacing:0.296px;left:505.5px;">0.00 h</span>
<span class="gc red" style="top:108.0px;font-size:11px;letter-spacing:-0.026px;left:598.9px;">-136.00 h</span>
<div class="bar" style="left:663.8px;top:103.4px;width:88.2px;height:19.6px"></div>
<span class="gc" style="top:109.2px;font-size:11px;letter-spacing:0.051px;left:757.2px;color:#404040;">-752.90</span>
<div class="a" style="left:0;top:150px;width:810.5px;height:1px;background:#e4e4e4"></div>
<span class="gc" style="top:133.0px;font-size:11px;letter-spacing:-0.08px;left:3.1999999999999886px;color:#404040;">Klein Elisa</span>
<span class="gc grn" style="top:133.0px;font-size:11px;letter-spacing:-0.009px;left:300.6px;">0.00</span>
<span class="gc grn" style="top:133.0px;font-size:11px;letter-spacing:0.296px;left:397.6px;">0.00 h</span>
<span class="gc grn" style="top:133.0px;font-size:11px;letter-spacing:0.296px;left:505.5px;">0.00 h</span>
<span class="gc red" style="top:133.0px;font-size:11px;letter-spacing:-0.026px;left:598.9px;">-136.00 h</span>
<div class="bar" style="left:670.1px;top:128.4px;width:81.9px;height:19.6px"></div>
<span class="gc" style="top:134.2px;font-size:11px;letter-spacing:0.051px;left:757.2px;color:#404040;">-698.40</span>
<div class="a" style="left:0;top:175px;width:810.5px;height:1px;background:#e4e4e4"></div>
<span class="gc" style="top:158.0px;font-size:11px;letter-spacing:0.127px;left:3.1999999999999886px;color:#404040;">Steiner Sophie</span>
<span class="gc grn" style="top:158.0px;font-size:11px;letter-spacing:-0.009px;left:300.6px;">0.00</span>
<span class="gc grn" style="top:158.0px;font-size:11px;letter-spacing:0.296px;left:397.6px;">0.00 h</span>
<span class="gc grn" style="top:158.0px;font-size:11px;letter-spacing:0.296px;left:505.5px;">0.00 h</span>
<span class="gc red" style="top:158.0px;font-size:11px;letter-spacing:-0.026px;left:598.9px;">-102.00 h</span>
<div class="bar" style="left:688.9px;top:153.4px;width:63.1px;height:19.6px"></div>
<span class="gc" style="top:159.2px;font-size:11px;letter-spacing:0.051px;left:757.2px;color:#404040;">-538.00</span>
<div class="a" style="left:0;top:200px;width:810.5px;height:1px;background:#e4e4e4"></div>
<span class="gc" style="top:183.0px;font-size:11px;letter-spacing:0.255px;left:3.1999999999999886px;color:#404040;">Wertz Werner</span>
<span class="gc grn" style="top:183.0px;font-size:11px;letter-spacing:-0.009px;left:300.6px;">0.00</span>
<span class="gc grn" style="top:183.0px;font-size:11px;letter-spacing:0.296px;left:397.6px;">0.00 h</span>
<span class="gc grn" style="top:183.0px;font-size:11px;letter-spacing:0.296px;left:505.5px;">0.00 h</span>
<span class="gc red" style="top:183.0px;font-size:11px;letter-spacing:-0.026px;left:598.9px;">-136.00 h</span>
<div class="bar" style="left:662.9px;top:178.4px;width:89.1px;height:19.6px"></div>
<span class="gc" style="top:184.2px;font-size:11px;letter-spacing:0.051px;left:757.2px;color:#404040;">-760.00</span>
<div class="a" style="left:0;top:225px;width:810.5px;height:1px;background:#e4e4e4"></div>
<span class="gc" style="top:208.0px;font-size:11px;letter-spacing:0.133px;left:3.1999999999999886px;color:#404040;">Berger Stefanie</span>
<span class="gc grn" style="top:208.0px;font-size:11px;letter-spacing:-0.009px;left:300.6px;">0.00</span>
<span class="gc grn" style="top:208.0px;font-size:11px;letter-spacing:0.296px;left:397.6px;">0.00 h</span>
<span class="gc grn" style="top:208.0px;font-size:11px;letter-spacing:0.296px;left:505.5px;">0.00 h</span>
<span class="gc red" style="top:208.0px;font-size:11px;letter-spacing:-0.026px;left:598.9px;">-136.00 h</span>
<div class="bar" style="left:670.4px;top:203.4px;width:81.6px;height:19.6px"></div>
<span class="gc" style="top:209.2px;font-size:11px;letter-spacing:0.051px;left:757.2px;color:#404040;">-696.60</span>
<div class="a" style="left:0;top:250px;width:810.5px;height:1px;background:#e4e4e4"></div>
<span class="gc" style="top:233.0px;font-size:11px;letter-spacing:-0.049px;left:3.1999999999999886px;color:#404040;">Reunig Elena</span>
<span class="gc grn" style="top:233.0px;font-size:11px;letter-spacing:-0.009px;left:300.6px;">0.00</span>
<span class="gc grn" style="top:233.0px;font-size:11px;letter-spacing:0.296px;left:397.6px;">0.00 h</span>
<span class="gc grn" style="top:233.0px;font-size:11px;letter-spacing:0.296px;left:505.5px;">0.00 h</span>
<span class="gc red" style="top:233.0px;font-size:11px;letter-spacing:-0.026px;left:598.9px;">-136.00 h</span>
<div class="bar" style="left:665.5px;top:228.4px;width:86.5px;height:19.6px"></div>
<span class="gc" style="top:234.2px;font-size:11px;letter-spacing:0.051px;left:757.2px;color:#404040;">-738.00</span>
<div class="a" style="left:0;top:275px;width:810.5px;height:1px;background:#e4e4e4"></div>
<span class="gc" style="top:258.0px;font-size:11px;letter-spacing:0.208px;left:3.1999999999999886px;color:#404040;">Hofer Christian</span>
<span class="gc grn" style="top:258.0px;font-size:11px;letter-spacing:-0.009px;left:300.6px;">0.00</span>
<span class="gc grn" style="top:258.0px;font-size:11px;letter-spacing:0.296px;left:397.6px;">0.00 h</span>
<span class="gc grn" style="top:258.0px;font-size:11px;letter-spacing:0.296px;left:505.5px;">0.00 h</span>
<span class="gc red" style="top:258.0px;font-size:11px;letter-spacing:-0.026px;left:598.9px;">-136.00 h</span>
<div class="bar" style="left:661.2px;top:253.4px;width:90.8px;height:19.6px"></div>
<span class="gc" style="top:259.2px;font-size:11px;letter-spacing:0.051px;left:757.2px;color:#404040;">-774.67</span>
</div>
<div class="a" style="left:1059px;top:607px;width:14px;height:261px;background:#fcfcfc"></div>
<div class="a" style="left:1059.5px;top:623.5px;width:12.5px;height:113px;background:#c7c7c7"></div>
<svg style="left:1061.5px;top:612.5px" width="8" height="5" viewBox="0 0 8 5"><path d="M0 4.6 L4 0.4 L8 4.6 Z" fill="#a8a8a8"/></svg>
<svg style="left:1061.5px;top:856.5px" width="8" height="5" viewBox="0 0 8 5"><path d="M0 0.4 L4 4.6 L8 0.4 Z" fill="#3a3a3a"/></svg>
<div class="a" style="left:246px;top:868px;width:828px;height:1px;background:#d4d4d4"></div>
<svg style="left:253.2px;top:877.0px" width="9.4" height="16" viewBox="0 0 9.4 16"><path d="M8.4 1 L1 8.0 L8.4 15" fill="none" stroke="#b8b8b8" stroke-width="1.1" stroke-linecap="round" stroke-linejoin="round"/></svg><svg style="left:259.8px;top:877.0px" width="9.4" height="16" viewBox="0 0 9.4 16"><path d="M8.4 1 L1 8.0 L8.4 15" fill="none" stroke="#b8b8b8" stroke-width="1.1" stroke-linecap="round" stroke-linejoin="round"/></svg><svg style="left:287.90000000000003px;top:877.0px" width="9.4" height="16" viewBox="0 0 9.4 16"><path d="M8.4 1 L1 8.0 L8.4 15" fill="none" stroke="#b8b8b8" stroke-width="1.1" stroke-linecap="round" stroke-linejoin="round"/></svg><div class="sep" style="left:313px;top:878px;height:14px"></div><span class="pg" style="top:879.5px;font-size:11px;letter-spacing:-0.179px;left:329.3px;">Seite</span><div class="pgin" style="left:372px;top:873.7px;width:40px"></div><span class="pg" style="top:880.5px;font-size:11px;left:379.5px;">1</span><span class="pg" style="top:879.5px;font-size:11px;letter-spacing:0.013px;left:420.8px;">von 1</span><div class="sep" style="left:465px;top:878px;height:14px"></div><svg style="left:481.3px;top:877.0px" width="9.4" height="16" viewBox="0 0 9.4 16"><path d="M1 1 L8.4 8.0 L1 15" fill="none" stroke="#b8b8b8" stroke-width="1.1" stroke-linecap="round" stroke-linejoin="round"/></svg><svg style="left:509.50000000000006px;top:877.0px" width="9.4" height="16" viewBox="0 0 9.4 16"><path d="M1 1 L8.4 8.0 L1 15" fill="none" stroke="#b8b8b8" stroke-width="1.1" stroke-linecap="round" stroke-linejoin="round"/></svg><svg style="left:516.0999999999999px;top:877.0px" width="9.4" height="16" viewBox="0 0 9.4 16"><path d="M1 1 L8.4 8.0 L1 15" fill="none" stroke="#b8b8b8" stroke-width="1.1" stroke-linecap="round" stroke-linejoin="round"/></svg><div class="sep" style="left:538px;top:878px;height:14px"></div><svg style="left:548px;top:874px" width="22" height="22" viewBox="0 0 22 22"><path d="M17.54 6.88 A7.2 7.2 0 1 0 18.04 12.50" fill="none" stroke="#9a9a9a" stroke-width="1.1" stroke-linecap="round"/><path d="M17.84 3.28 V6.88 H13.94" fill="none" stroke="#9a9a9a" stroke-width="1.1" stroke-linecap="round" stroke-linejoin="round"/></svg><span class="pg" style="top:879.5px;font-size:11px;letter-spacing:0.06px;left:713.3px;">Ansicht 1 - 21 von 21</span><div class="sep" style="left:834px;top:878px;height:14px"></div><span class="pg" style="top:879.5px;font-size:11px;letter-spacing:-0.026px;left:849.8px;">Zeige</span><div class="pgin" style="left:893px;top:873.7px;width:54px"></div><span class="pg" style="top:880.5px;font-size:11px;left:900.3px;">100</span><svg style="left:930.3px;top:882.0px" width="9" height="6" viewBox="0 0 9 6"><path d="M1 1 L4.5 5 L8 1" fill="none" stroke="#777" stroke-width="1.1" stroke-linecap="round" stroke-linejoin="round"/></svg><span class="pg" style="top:879.5px;font-size:11px;letter-spacing:0.143px;left:962.3px;">Elemente pro Seite</span>
<div class="panel" style="left:1082px;top:513px;width:830px;height:391px"></div>
<span class="ptitle" style="top:520px;font-size:13px;letter-spacing:0.393px;left:1092px;">Übersicht: Stunden pro Hauptprojekt</span>
<svg style="left:1885px;top:517px" width="18" height="18" viewBox="0 0 18 18"><circle cx="9" cy="9" r="7.5" fill="none" stroke="#8c8c8c" stroke-width="1"/><path d="M6.4 7.1 C6.4 5.4 7.6 4.6 9 4.6 C10.5 4.6 11.6 5.5 11.6 6.9 C11.6 8.9 9 8.9 9 11.2" fill="none" stroke="#8c8c8c" stroke-width="1.1" stroke-linecap="round"/><circle cx="9" cy="13.3" r="0.75" fill="#8c8c8c"/></svg>
<div class="dtb" style="left:1085px;top:542px;width:276px;height:30px"></div><div class="dfld" style="left:1090px;top:545.0999999999999px;width:65px"></div><span class="t" style="top:552.3px;font-size:12px;letter-spacing:-0.149px;left:1096.6px;color:#404040;">Monat</span><svg style="left:1138.5px;top:553.5px" width="9" height="6" viewBox="0 0 9 6"><path d="M1 1 L4.5 5 L8 1" fill="none" stroke="#777" stroke-width="1.1" stroke-linecap="round" stroke-linejoin="round"/></svg><div class="dfld" style="left:1160.2px;top:545.0999999999999px;width:18.3px;border-radius:3px 0 0 3px;background:#fafafa"></div><svg style="left:1165.8px;top:550.8px" width="7" height="13" viewBox="0 0 7 13"><path d="M6 1 L1 6.5 L6 12" fill="none" stroke="#a0a0a0" stroke-width="1.1" stroke-linecap="round" stroke-linejoin="round"/></svg><div class="dfld" style="left:1177.5px;top:545.0999999999999px;width:70px"></div><span class="t" style="top:552.3px;font-size:12px;letter-spacing:-0.443px;left:1183.3px;color:#404040;">01.02.2020</span><div class="dfld" style="left:1246.5px;top:545.0999999999999px;width:70.5px"></div><span class="t" style="top:552.3px;font-size:12px;letter-spacing:-0.423px;left:1253.5px;color:#404040;">29.02.2020</span><div class="dfld" style="left:1316px;top:545.0999999999999px;width:17.5px;border-radius:0 3px 3px 0;background:#fafafa"></div><svg style="left:1321.5px;top:550.8px" width="7" height="13" viewBox="0 0 7 13"><path d="M1 1 L6 6.5 L1 12" fill="none" stroke="#a0a0a0" stroke-width="1.1" stroke-linecap="round" stroke-linejoin="round"/></svg><svg style="left:1333.8px;top:546.3px" width="22" height="22" viewBox="0 0 22 22"><path d="M17.71 6.77 A7.4 7.4 0 1 0 18.24 12.54" fill="none" stroke="#27a08b" stroke-width="1.3" stroke-linecap="round"/><path d="M18.01 3.17 V6.77 H14.11" fill="none" stroke="#27a08b" stroke-width="1.3" stroke-linecap="round" stroke-linejoin="round"/></svg>
<div class="combo" style="left:1363.5px;top:546px;width:169.5px"></div>
<div class="a" style="left:1370.4px;top:552px;width:134px;height:16px;overflow:hidden"><span class="t" style="top:1px;font-size:13px;left:0px;color:#404040;letter-spacing:0.42px;">Gruppiert nach 1. Ebene</span></div>
<svg style="left:1516.2px;top:556.0px" width="9" height="6" viewBox="0 0 9 6"><path d="M1 1 L4.5 5 L8 1" fill="none" stroke="#777" stroke-width="1.1" stroke-linecap="round" stroke-linejoin="round"/></svg>
<div class="a" style="left:1083px;top:574px;width:828px;height:1px;background:#d8d8d8"></div>
<div class="a" style="left:1083px;top:599px;width:828px;height:1px;background:#cdcdcd"></div>
<div class="a" style="left:1319px;top:575px;width:1px;height:24px;background:#d0d0d0"></div>
<div class="a" style="left:1437px;top:575px;width:1px;height:24px;background:#d0d0d0"></div>
<div class="a" style="left:1556px;top:575px;width:1px;height:24px;background:#d0d0d0"></div>
<div class="a" style="left:1674px;top:575px;width:1px;height:24px;background:#d0d0d0"></div>
<div class="a" style="left:1792px;top:575px;width:1px;height:24px;background:#d0d0d0"></div>
<div class="a" style="left:1910px;top:575px;width:1px;height:24px;background:#d0d0d0"></div>
<span class="gh" style="top:581.5px;font-size:11px;letter-spacing:0.293px;left:1090px;">Projekt</span>
<span class="gh" style="top:581.5px;font-size:11px;letter-spacing:0.191px;left:1326.6px;">Verrechenbare ...</span>
<span class="gh" style="top:581.5px;font-size:11px;letter-spacing:0.179px;left:1445px;">Nicht Verrechen...</span>
<span class="gh" style="top:581.5px;font-size:11px;letter-spacing:0.109px;left:1564.2px;">Gesamtarbeitsz...</span>
<span class="gh" style="top:581.5px;font-size:11px;letter-spacing:0.191px;left:1691px;">Verrechenbar %</span>
<span class="gh" style="top:581.5px;font-size:11px;letter-spacing:0.225px;left:1843px;">Zieldauer</span>
<div class="a" style="left:1083px;top:624px;width:828px;height:24.5px;background:#efeffc"></div>
<div class="a" style="left:1083px;top:624px;width:828px;height:1px;background:#e4e4e4"></div>
<div class="a" style="left:1083px;top:648px;width:828px;height:1px;background:#e4e4e4"></div>
<span class="gc" style="top:608.2px;font-size:11px;letter-spacing:0.084px;left:1086.3px;color:#404040;">4 Marketing &amp; PR</span>
<span class="gc grn" style="top:608.2px;font-size:11px;letter-spacing:0.096px;left:1403.6px;">0.00 h</span>
<span class="gc grn" style="top:631px;font-size:11px;letter-spacing:0.196px;left:1403.3px;font-weight:bold;font-style:italic;">0.00 h</span>
<span class="gc grn" style="top:608.2px;font-size:11px;letter-spacing:0.096px;left:1522.5px;">0.00 h</span>
<span class="gc grn" style="top:631px;font-size:11px;letter-spacing:0.196px;left:1522.2px;font-weight:bold;font-style:italic;">0.00 h</span>
<span class="gc grn" style="top:608.2px;font-size:11px;letter-spacing:0.096px;left:1640.7px;">0.00 h</span>
<span class="gc grn" style="top:631px;font-size:11px;letter-spacing:0.196px;left:1640.4px;font-weight:bold;font-style:italic;">0.00 h</span>
<span class="gc grn" style="top:608.2px;font-size:11px;letter-spacing:-0.023px;left:1765px;">0.0%</span>
<span class="gc grn" style="top:631px;font-size:11px;letter-spacing:0.127px;left:1764.7px;font-weight:bold;font-style:italic;">0.0%</span>
<span class="gc grn" style="top:608.2px;font-size:11px;letter-spacing:0.096px;left:1876.4px;">0.00 h</span>
<span class="gc grn" style="top:631px;font-size:11px;letter-spacing:0.196px;left:1876.1px;font-weight:bold;font-style:italic;">0.00 h</span>
<div class="a" style="left:1083px;top:868px;width:828px;height:1px;background:#d4d4d4"></div>
<svg style="left:1090.2px;top:877.0px" width="9.4" height="16" viewBox="0 0 9.4 16"><path d="M8.4 1 L1 8.0 L8.4 15" fill="none" stroke="#b8b8b8" stroke-width="1.1" stroke-linecap="round" stroke-linejoin="round"/></svg><svg style="left:1096.8px;top:877.0px" width="9.4" height="16" viewBox="0 0 9.4 16"><path d="M8.4 1 L1 8.0 L8.4 15" fill="none" stroke="#b8b8b8" stroke-width="1.1" stroke-linecap="round" stroke-linejoin="round"/></svg><svg style="left:1124.8999999999999px;top:877.0px" width="9.4" height="16" viewBox="0 0 9.4 16"><path d="M8.4 1 L1 8.0 L8.4 15" fill="none" stroke="#b8b8b8" stroke-width="1.1" stroke-linecap="round" stroke-linejoin="round"/></svg><div class="sep" style="left:1150px;top:878px;height:14px"></div><span class="pg" style="top:879.5px;font-size:11px;letter-spacing:-0.179px;left:1166.3px;">Seite</span><div class="pgin" style="left:1209px;top:873.7px;width:40px"></div><span class="pg" style="top:880.5px;font-size:11px;left:1216.5px;">1</span><span class="pg" style="top:879.5px;font-size:11px;letter-spacing:0.013px;left:1257.8px;">von 1</span><div class="sep" style="left:1302px;top:878px;height:14px"></div><svg style="left:1318.3px;top:877.0px" width="9.4" height="16" viewBox="0 0 9.4 16"><path d="M1 1 L8.4 8.0 L1 15" fill="none" stroke="#b8b8b8" stroke-width="1.1" stroke-linecap="round" stroke-linejoin="round"/></svg><svg style="left:1346.5px;top:877.0px" width="9.4" height="16" viewBox="0 0 9.4 16"><path d="M1 1 L8.4 8.0 L1 15" fill="none" stroke="#b8b8b8" stroke-width="1.1" stroke-linecap="round" stroke-linejoin="round"/></svg><svg style="left:1353.1px;top:877.0px" width="9.4" height="16" viewBox="0 0 9.4 16"><path d="M1 1 L8.4 8.0 L1 15" fill="none" stroke="#b8b8b8" stroke-width="1.1" stroke-linecap="round" stroke-linejoin="round"/></svg><div class="sep" style="left:1375px;top:878px;height:14px"></div><svg style="left:1385px;top:874px" width="22" height="22" viewBox="0 0 22 22"><path d="M17.54 6.88 A7.2 7.2 0 1 0 18.04 12.50" fill="none" stroke="#9a9a9a" stroke-width="1.1" stroke-linecap="round"/><path d="M17.84 3.28 V6.88 H13.94" fill="none" stroke="#9a9a9a" stroke-width="1.1" stroke-linecap="round" stroke-linejoin="round"/></svg><span class="pg" style="top:879.5px;font-size:11px;letter-spacing:0.101px;left:1561.9px;">Ansicht 1 - 1 von 1</span><div class="sep" style="left:1671px;top:878px;height:14px"></div><span class="pg" style="top:879.5px;font-size:11px;letter-spacing:-0.026px;left:1686.8px;">Zeige</span><div class="pgin" style="left:1730px;top:873.7px;width:54px"></div><span class="pg" style="top:880.5px;font-size:11px;left:1737.3px;">100</span><svg style="left:1767.3px;top:882.0px" width="9" height="6" viewBox="0 0 9 6"><path d="M1 1 L4.5 5 L8 1" fill="none" stroke="#777" stroke-width="1.1" stroke-linecap="round" stroke-linejoin="round"/></svg><span class="pg" style="top:879.5px;font-size:11px;letter-spacing:0.143px;left:1799.3px;">Elemente pro Seite</span>
</div></body></html>
